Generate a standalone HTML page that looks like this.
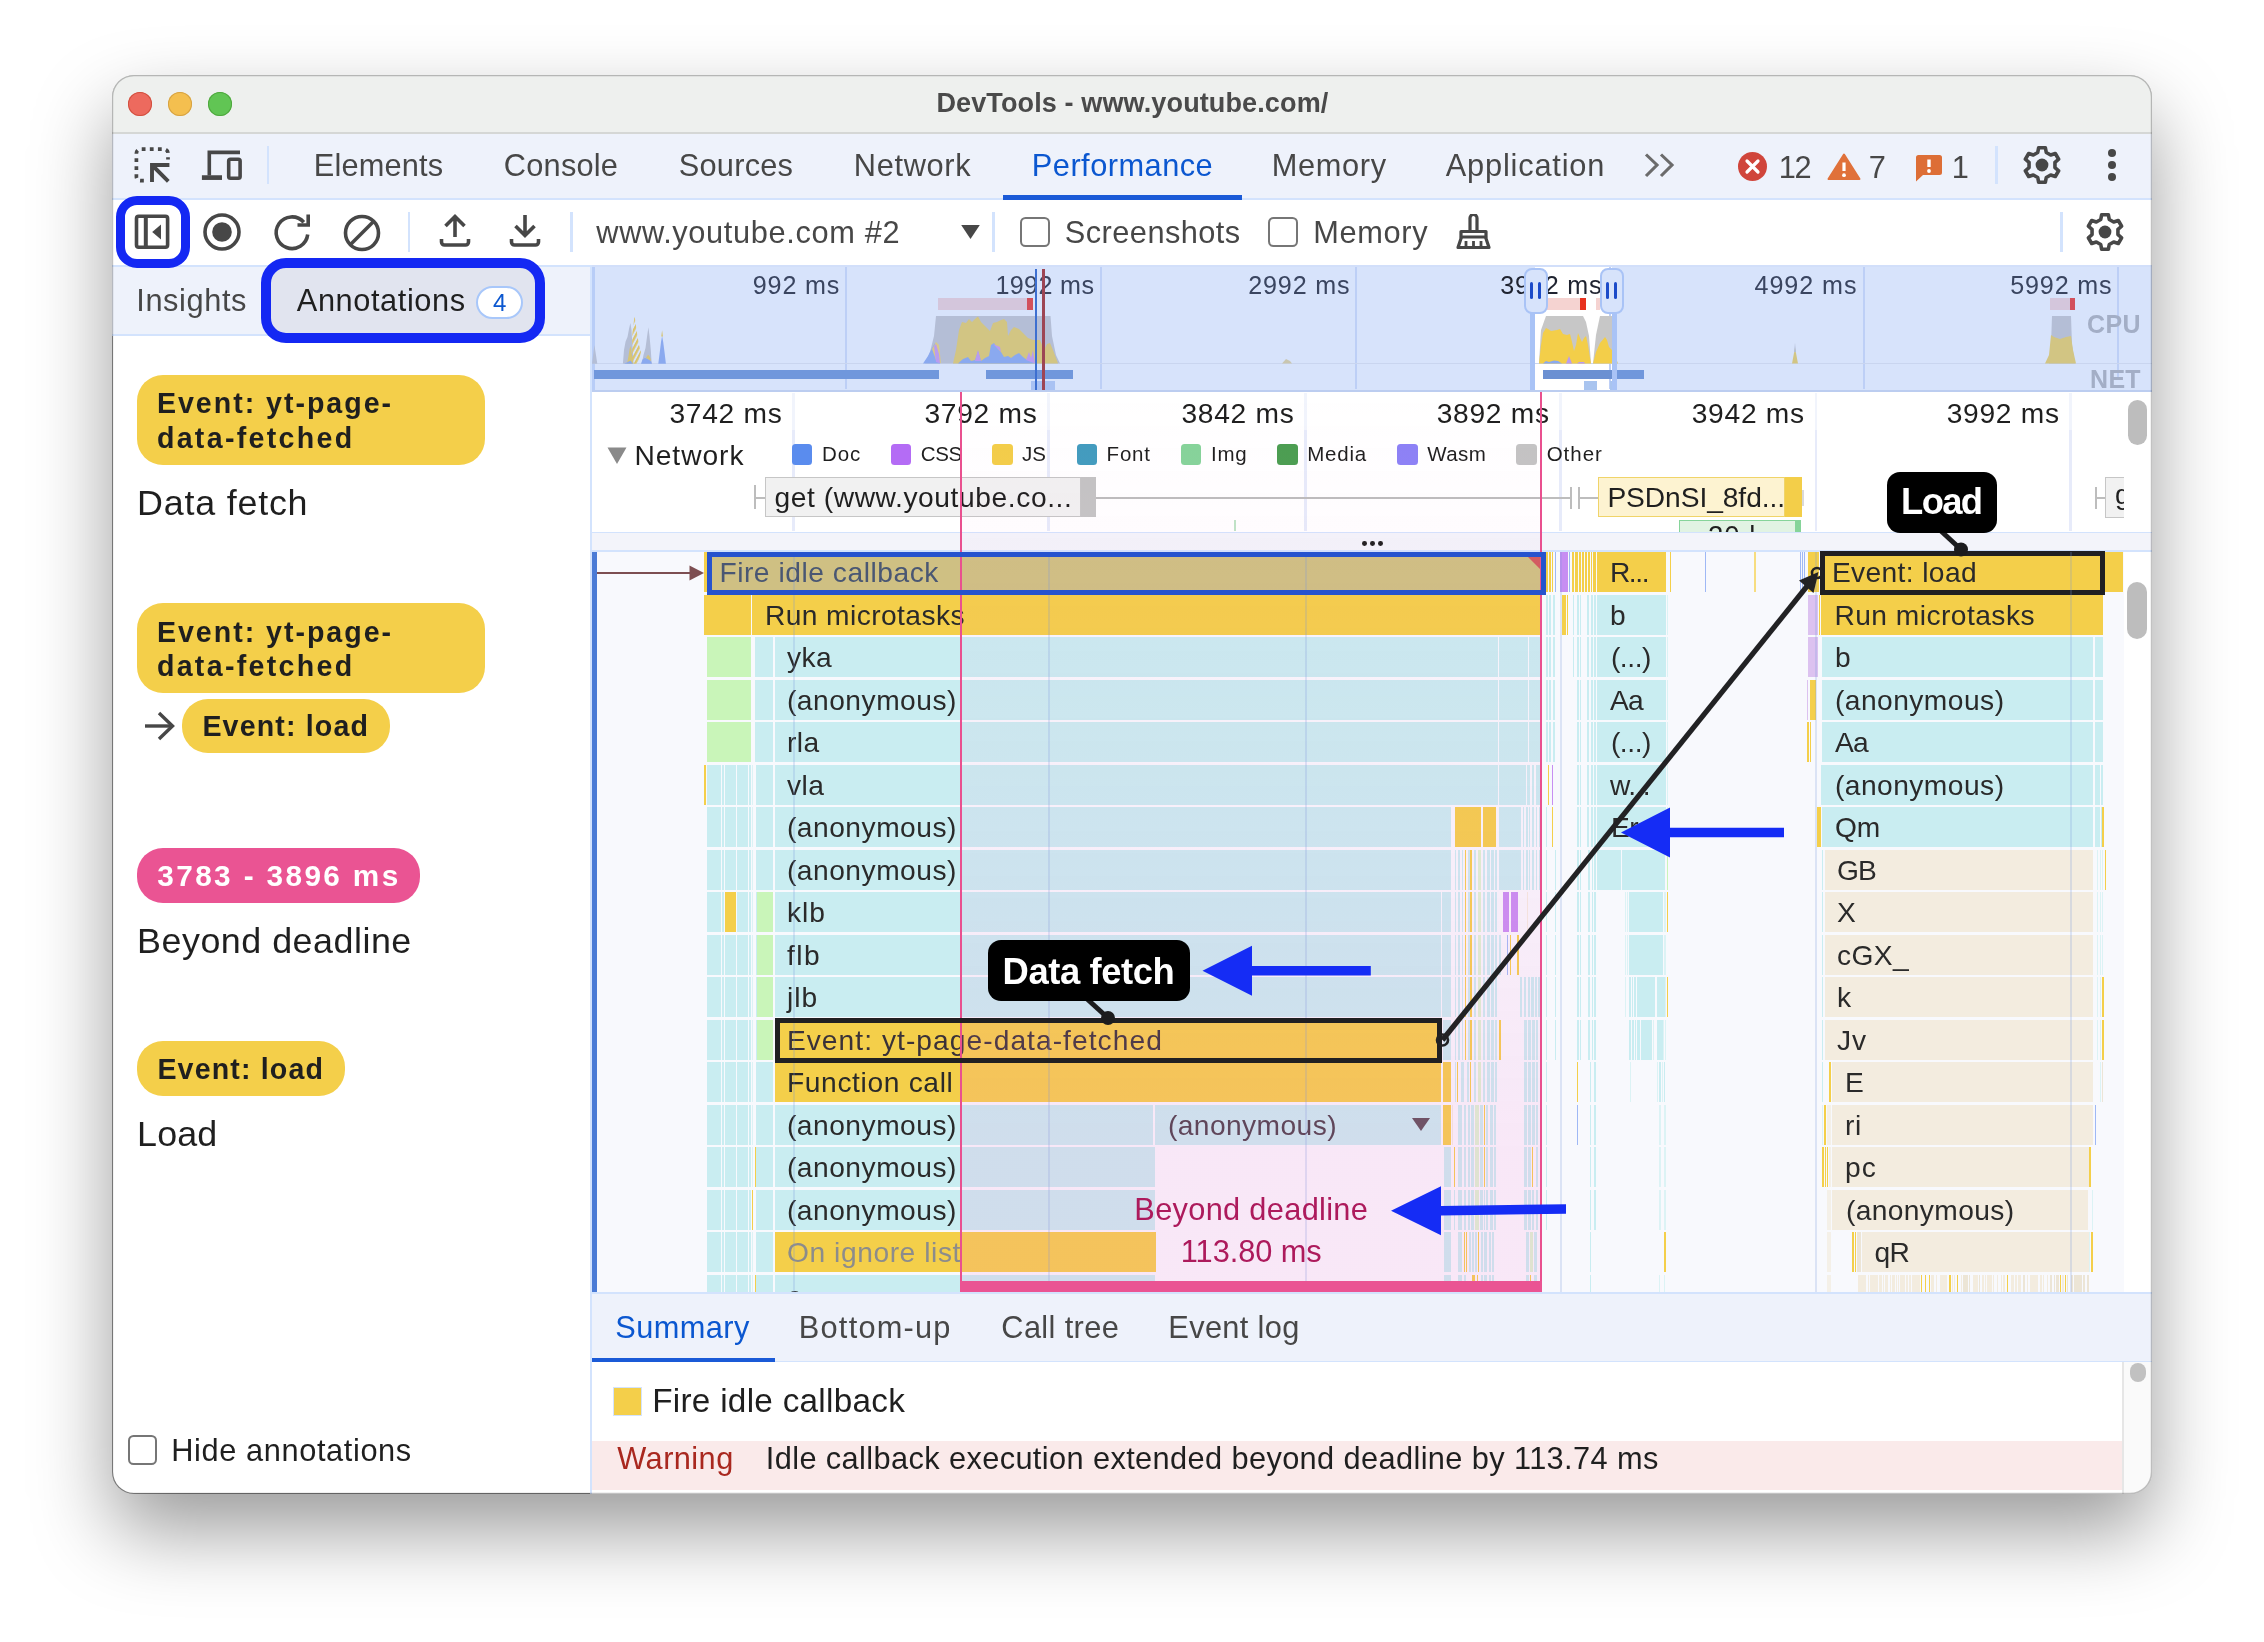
<!DOCTYPE html>
<html><head><meta charset="utf-8"><title>DevTools - www.youtube.com/</title>
<style>
html,body{margin:0;padding:0;background:#fff;}
body{width:2264px;height:1642px;position:relative;overflow:hidden;font-family:"Liberation Sans",sans-serif;}
#r div,#r svg{position:absolute;}
#r .t{white-space:nowrap;}
#in{will-change:transform;}
#win{position:absolute;left:113px;top:76px;width:2038px;height:1417px;border-radius:21px;background:#fff;box-shadow:0 0 0 1px rgba(0,0,0,.24),0 37px 80px rgba(0,0,0,.40);}
#clip{position:absolute;left:112px;top:75px;width:2040px;height:1419px;border-radius:22px;overflow:hidden;}
#ring{position:absolute;left:112px;top:75px;width:2040px;height:1419px;border-radius:22px;box-shadow:inset 0 0 0 1.2px rgba(0,0,0,.24);pointer-events:none;}
</style></head><body><div id="r">
<div id="win"></div><div id="clip"><div id="in" style="left:-112px;top:-75px;width:2264px;height:1642px;">
<div style="left:112px;top:75px;width:2040px;height:58px;background:#eef0ee;"></div>
<div style="left:112px;top:132px;width:2040px;height:1.5px;background:#d5d7d5;"></div>
<div style="left:128px;top:92px;width:24px;height:24px;background:#ed6a5e;border-radius:50%;box-shadow:inset 0 0 0 1px #d1503f;"></div>
<div style="left:168px;top:92px;width:24px;height:24px;background:#f4bf4f;border-radius:50%;box-shadow:inset 0 0 0 1px #d6a243;"></div>
<div style="left:208px;top:92px;width:24px;height:24px;background:#61c554;border-radius:50%;box-shadow:inset 0 0 0 1px #4fa73e;"></div>
<div class="t" style="left:936.46px;top:85.63px;font-size:27.04px;line-height:34px;color:#4a4a4a;letter-spacing:0.110px;font-weight:700;">DevTools - www.youtube.com/</div>
<div style="left:112px;top:133.5px;width:2040px;height:64.5px;background:#eef2fb;"></div>
<div style="left:112px;top:198px;width:2040px;height:2px;background:#d3e3fd;"></div>
<div style="left:112px;top:200px;width:2040px;height:65px;background:#fff;"></div>
<div style="left:112px;top:265px;width:2040px;height:2px;background:#d3e3fd;"></div>
<div class="t" style="left:313.80px;top:145.65px;font-size:30.75px;line-height:39px;color:#474747;letter-spacing:0.152px;">Elements</div>
<div class="t" style="left:503.80px;top:145.65px;font-size:30.75px;line-height:39px;color:#474747;letter-spacing:0.225px;">Console</div>
<div class="t" style="left:678.80px;top:145.65px;font-size:30.75px;line-height:39px;color:#474747;letter-spacing:0.227px;">Sources</div>
<div class="t" style="left:853.80px;top:145.65px;font-size:30.75px;line-height:39px;color:#474747;letter-spacing:0.660px;">Network</div>
<div class="t" style="left:1271.80px;top:145.65px;font-size:30.75px;line-height:39px;color:#474747;letter-spacing:0.641px;">Memory</div>
<div class="t" style="left:1445.80px;top:145.65px;font-size:30.75px;line-height:39px;color:#474747;letter-spacing:0.815px;">Application</div>
<div class="t" style="left:1031.80px;top:145.65px;font-size:30.75px;line-height:39px;color:#0b57d0;letter-spacing:0.487px;">Performance</div>
<div style="left:1003px;top:195px;width:239px;height:4.5px;background:#1a5ad7;"></div>
<svg style="left:132px;top:145px;" width="40" height="40" viewBox="0 0 40 40"><g fill="none" stroke="#474747"><path d="M36 14.5 V8.2 a4 4 0 0 0 -4 -4 H8.4 a4 4 0 0 0 -4 4 V31.7 a4 4 0 0 0 4 4 H14.5" stroke-width="3.7" stroke-dasharray="3.8 4.3" stroke-dashoffset="1.5"/><path d="M20 37 V20 H37.4 M21 21 L36.3 36.3" stroke-width="3.9"/></g></svg>
<svg style="left:200px;top:148px;" width="46" height="34" viewBox="0 0 46 34"><g fill="none" stroke="#474747" stroke-width="3.6"><path d="M9.3 27.5 V4.4 H40"/><path d="M1.9 29.6 H22" stroke-width="4.7"/><rect x="28.7" y="11.3" width="11.4" height="19" rx="1.8"/></g></svg>
<div style="left:267.2px;top:146px;width:2.1px;height:38px;background:#d3e3fd;"></div>
<svg style="left:1642px;top:152px;" width="36" height="28" viewBox="0 0 36 28"><g fill="none" stroke="#6b6b6b" stroke-width="3.1"><path d="M4 2.5 L15 13 L4 24"/><path d="M19 2.5 L30 13 L19 24"/></g></svg>
<svg style="left:1737px;top:151px;" width="31" height="31" viewBox="0 0 31 31"><circle cx="15.5" cy="15.5" r="14.5" fill="#d0453b"/><path d="M10 10 L21 21 M21 10 L10 21" stroke="#fff" stroke-width="3.2" stroke-linecap="round"/></svg>
<div class="t" style="left:1778.80px;top:147.65px;font-size:30.75px;line-height:39px;color:#474747;letter-spacing:-1.402px;">12</div>
<svg style="left:1826px;top:152px;" width="36" height="29" viewBox="0 0 36 29"><path d="M18 2.5 L33.5 27 H2.5 Z" fill="#e0713a" stroke="#e0713a" stroke-width="2" stroke-linejoin="round"/><path d="M18 10.5 V19" stroke="#fff" stroke-width="3.2"/><circle cx="18" cy="23.2" r="1.9" fill="#fff"/></svg>
<div class="t" style="left:1868.80px;top:147.65px;font-size:30.75px;line-height:39px;color:#474747;">7</div>
<svg style="left:1914px;top:153px;" width="30" height="30" viewBox="0 0 30 30"><path d="M2 4.5 a2.5 2.5 0 0 1 2.5 -2.5 H25.5 a2.5 2.5 0 0 1 2.5 2.5 V19.5 a2.5 2.5 0 0 1 -2.5 2.5 H9 L2 28.5 Z" fill="#dd6e36"/><path d="M15 6.5 V14" stroke="#fff" stroke-width="3.4"/><circle cx="15" cy="18" r="1.9" fill="#fff"/></svg>
<div class="t" style="left:1951.80px;top:147.65px;font-size:30.75px;line-height:39px;color:#474747;">1</div>
<div style="left:1995px;top:146px;width:2.5px;height:38px;background:#d3e3fd;"></div>
<svg style="left:2022px;top:144.8px;" width="40" height="40" viewBox="0 0 40 40"><path d="M16.68 2.72 L23.32 2.72 L24.28 7.51 L28.67 10.05 L33.31 8.48 L36.63 14.24 L32.95 17.46 L32.95 22.54 L36.63 25.76 L33.31 31.52 L28.68 29.95 L24.28 32.49 L23.32 37.28 L16.68 37.28 L15.72 32.49 L11.33 29.95 L6.69 31.52 L3.37 25.76 L7.05 22.54 L7.05 17.46 L3.37 14.24 L6.69 8.48 L11.32 10.05 L15.72 7.51 Z" fill="none" stroke="#474747" stroke-width="3.6" stroke-linejoin="round"/><circle cx="20" cy="20" r="6.4" fill="#474747"/></svg>
<div style="left:2107.7px;top:149.3px;width:8px;height:8px;background:#474747;border-radius:50%;"></div>
<div style="left:2107.7px;top:161.3px;width:8px;height:8px;background:#474747;border-radius:50%;"></div>
<div style="left:2107.7px;top:173.2px;width:8px;height:8px;background:#474747;border-radius:50%;"></div>
<svg style="left:132px;top:213px;" width="40" height="40" viewBox="0 0 40 40"><g fill="none" stroke="#474747" stroke-width="3.6"><rect x="4.5" y="3.2" width="31.1" height="31" rx="2.2"/><path d="M13.8 3.2 V34.2" stroke-width="4"/></g><path d="M20.2 18.9 L29 11.4 V26.4 Z" fill="#474747"/></svg>
<svg style="left:202px;top:212px;" width="40" height="40" viewBox="0 0 40 40"><circle cx="20" cy="20" r="17" fill="none" stroke="#474747" stroke-width="3.6"/><circle cx="20" cy="20" r="9.8" fill="#474747"/></svg>
<svg style="left:270px;top:211px;" width="44" height="44" viewBox="0 0 44 44"><g fill="none" stroke="#474747" stroke-width="3.6"><path d="M37.7 23.5 A15.8 15.8 0 1 1 33.8 11.2"/><path d="M38.2 3.4 V14 H27.5"/></g></svg>
<svg style="left:342px;top:213px;" width="40" height="40" viewBox="0 0 40 40"><g fill="none" stroke="#474747" stroke-width="3.6"><circle cx="20" cy="20" r="16.5"/><path d="M8.5 31.5 L31.5 8.5"/></g></svg>
<div style="left:407.5px;top:212px;width:2.5px;height:40px;background:#d3e3fd;"></div>
<svg style="left:438px;top:213px;" width="34" height="36" viewBox="0 0 34 36"><g fill="none" stroke="#474747" stroke-width="3.6"><path d="M17 24 V4 M7.5 13 L17 3.5 L26.5 13"/><path d="M3.5 26 V29 a3 3 0 0 0 3 3 H27.5 a3 3 0 0 0 3 -3 V26"/></g></svg>
<svg style="left:508px;top:213px;" width="34" height="36" viewBox="0 0 34 36"><g fill="none" stroke="#474747" stroke-width="3.6"><path d="M17 2 V22 M7.5 13 L17 22.5 L26.5 13"/><path d="M3.5 26 V29 a3 3 0 0 0 3 3 H27.5 a3 3 0 0 0 3 -3 V26"/></g></svg>
<div style="left:570px;top:212px;width:2.5px;height:40px;background:#d3e3fd;"></div>
<div class="t" style="left:596.30px;top:213.35px;font-size:30.75px;line-height:39px;color:#474747;letter-spacing:0.645px;">www.youtube.com #2</div>
<svg style="left:960px;top:223.5px;" width="21" height="16" viewBox="0 0 21 16"><path d="M1.2 1 H19.8 L10.5 15 Z" fill="#474747"/></svg>
<div style="left:992px;top:212px;width:2.5px;height:40px;background:#d3e3fd;"></div>
<div style="left:1020px;top:217px;width:29.7px;height:29.7px;background:#fff;border:2.5px solid #767676;border-radius:5.5px;box-sizing:border-box;"></div>
<div class="t" style="left:1064.80px;top:213.35px;font-size:30.75px;line-height:39px;color:#474747;letter-spacing:0.452px;">Screenshots</div>
<div style="left:1268px;top:217px;width:29.7px;height:29.7px;background:#fff;border:2.5px solid #767676;border-radius:5.5px;box-sizing:border-box;"></div>
<div class="t" style="left:1313.30px;top:213.35px;font-size:30.75px;line-height:39px;color:#474747;letter-spacing:0.641px;">Memory</div>
<svg style="left:1455px;top:214px;" width="37" height="36" viewBox="0 0 37 36"><g fill="none" stroke="#474747" stroke-width="3.2" stroke-linejoin="round"><path d="M15 17 V4 a3.5 3.5 0 0 1 7 0 V17"/><path d="M6 17.5 H31 V23 H6 Z"/><path d="M6.5 23 L3 33.5 H34 L30.5 23"/><path d="M11 27 V33 M18.5 27 V33 M26 27 V33" stroke-width="2.8"/></g></svg>
<div style="left:2060px;top:212px;width:2.5px;height:40px;background:#d3e3fd;"></div>
<svg style="left:2085.2px;top:212px;" width="40" height="40" viewBox="0 0 40 40"><path d="M16.68 2.72 L23.32 2.72 L24.28 7.51 L28.67 10.05 L33.31 8.48 L36.63 14.24 L32.95 17.46 L32.95 22.54 L36.63 25.76 L33.31 31.52 L28.68 29.95 L24.28 32.49 L23.32 37.28 L16.68 37.28 L15.72 32.49 L11.33 29.95 L6.69 31.52 L3.37 25.76 L7.05 22.54 L7.05 17.46 L3.37 14.24 L6.69 8.48 L11.32 10.05 L15.72 7.51 Z" fill="none" stroke="#474747" stroke-width="3.6" stroke-linejoin="round"/><circle cx="20" cy="20" r="6.4" fill="#474747"/></svg>
<div style="left:112px;top:267px;width:478px;height:66.5px;background:#eef2fb;"></div>
<div style="left:112px;top:333.5px;width:478px;height:2px;background:#d3e3fd;"></div>
<div style="left:590px;top:267px;width:2px;height:1227px;background:#d3e3fd;"></div>
<div class="t" style="left:136.30px;top:280.65px;font-size:30.75px;line-height:39px;color:#474747;letter-spacing:0.591px;">Insights</div>
<div style="left:271px;top:267px;width:264px;height:66.5px;background:#e1e4ef;border-radius:14px 14px 0 0;"></div>
<div class="t" style="left:296.80px;top:280.65px;font-size:30.75px;line-height:39px;color:#1f1f1f;letter-spacing:0.589px;">Annotations</div>
<div style="left:476px;top:286px;width:47px;height:33px;background:#fff;border:2px solid #a8c7fa;border-radius:17px;box-sizing:border-box;"></div>
<div class="t" style="left:493.10px;top:286.75px;font-size:24.0875px;line-height:31px;color:#0b57d0;">4</div>
<div style="left:137px;top:375px;width:348px;height:90px;background:#f4cf4a;border-radius:26px;"></div>
<div class="t" style="left:156.90px;top:385.09px;font-size:28.6px;line-height:36px;color:#1f1f1f;letter-spacing:1.974px;font-weight:700;">Event: yt-page-</div>
<div class="t" style="left:156.90px;top:419.89px;font-size:28.6px;line-height:36px;color:#1f1f1f;letter-spacing:2.305px;font-weight:700;">data-fetched</div>
<div class="t" style="left:137.10px;top:479.57px;font-size:35.875px;line-height:46px;color:#1f1f1f;letter-spacing:0.778px;">Data fetch</div>
<div style="left:137px;top:603px;width:348px;height:90px;background:#f4cf4a;border-radius:26px;"></div>
<div class="t" style="left:156.90px;top:613.59px;font-size:28.6px;line-height:36px;color:#1f1f1f;letter-spacing:1.974px;font-weight:700;">Event: yt-page-</div>
<div class="t" style="left:156.90px;top:647.59px;font-size:28.6px;line-height:36px;color:#1f1f1f;letter-spacing:2.305px;font-weight:700;">data-fetched</div>
<svg style="left:142px;top:708px;" width="36" height="36" viewBox="0 0 36 36"><g fill="none" stroke="#474747" stroke-width="3.4"><path d="M3 18 H30"/><path d="M17 5 L30.5 18 L17 31"/></g></svg>
<div style="left:182px;top:698.5px;width:208px;height:54.5px;background:#f4cf4a;border-radius:26px;"></div>
<div class="t" style="left:202.40px;top:708.09px;font-size:28.6px;line-height:36px;color:#1f1f1f;letter-spacing:1.141px;font-weight:700;">Event: load</div>
<div style="left:137px;top:848px;width:283px;height:55px;background:#ea5493;border-radius:26px;"></div>
<div class="t" style="left:157.36px;top:857.19px;font-size:29.744px;line-height:37px;color:#fff;letter-spacing:2.376px;font-weight:700;">3783 - 3896 ms</div>
<div class="t" style="left:137.10px;top:917.57px;font-size:35.875px;line-height:46px;color:#1f1f1f;letter-spacing:0.500px;">Beyond deadline</div>
<div style="left:137px;top:1041px;width:208px;height:55px;background:#f4cf4a;border-radius:26px;"></div>
<div class="t" style="left:157.40px;top:1051.09px;font-size:28.6px;line-height:36px;color:#1f1f1f;letter-spacing:1.141px;font-weight:700;">Event: load</div>
<div class="t" style="left:137.10px;top:1110.57px;font-size:35.875px;line-height:46px;color:#1f1f1f;letter-spacing:0.122px;">Load</div>
<div style="left:127.5px;top:1435px;width:29.7px;height:29.7px;background:#fff;border:2.5px solid #767676;border-radius:5.5px;box-sizing:border-box;"></div>
<div class="t" style="left:171.30px;top:1430.65px;font-size:30.75px;line-height:39px;color:#1f1f1f;letter-spacing:0.607px;">Hide annotations</div>
<div style="left:592px;top:267px;width:1560px;height:123px;background:#d7e3fb;"></div>
<div style="left:592px;top:265px;width:1560px;height:2px;background:#d2dffa;"></div>
<div style="left:592px;top:389.5px;width:1560px;height:2px;background:#bccdf0;"></div>
<div style="left:592px;top:267px;width:2.9px;height:123px;background:#b8cdf7;"></div>
<div style="left:1535px;top:267px;width:77px;height:123px;background:#fff;"></div>
<div style="left:844.5px;top:267px;width:2px;height:122px;background:#bdcff6;"></div>
<div style="left:1099.5px;top:267px;width:2px;height:122px;background:#bdcff6;"></div>
<div style="left:1354.5px;top:267px;width:2px;height:122px;background:#bdcff6;"></div>
<div style="left:1608.5px;top:267px;width:2px;height:122px;background:#bdcff6;"></div>
<div style="left:1862.5px;top:267px;width:2px;height:122px;background:#bdcff6;"></div>
<div style="left:2117px;top:267px;width:2px;height:122px;background:#bdcff6;"></div>
<div style="left:594px;top:363.2px;width:1558px;height:1.2px;background:#c9d5ef;"></div>
<div class="t" style="left:752.84px;top:268.60px;font-size:25.1125px;line-height:32px;color:#3a4560;letter-spacing:0.818px;">992 ms</div>
<div class="t" style="left:995.40px;top:268.60px;font-size:25.1125px;line-height:32px;color:#3a4560;letter-spacing:0.377px;">1992 ms</div>
<div class="t" style="left:1248.33px;top:268.60px;font-size:25.1125px;line-height:32px;color:#3a4560;letter-spacing:0.806px;">2992 ms</div>
<div class="t" style="left:1754.47px;top:268.60px;font-size:25.1125px;line-height:32px;color:#3a4560;letter-spacing:0.949px;">4992 ms</div>
<div class="t" style="left:2010.33px;top:268.60px;font-size:25.1125px;line-height:32px;color:#3a4560;letter-spacing:0.806px;">5992 ms</div>
<div class="t" style="left:1500.33px;top:268.60px;font-size:25.1125px;line-height:32px;color:#1f2330;letter-spacing:0.806px;">3992 ms</div>
<div class="t" style="left:2087.04px;top:309.35px;font-size:24.96px;line-height:31px;color:#a3aec6;letter-spacing:0.406px;font-weight:700;">CPU</div>
<div style="left:1897px;top:380px;width:255px;height:10px;background:#d7e3fb;"></div>
<div class="t" style="left:2090.04px;top:364.35px;font-size:24.96px;line-height:31px;color:#a3aec6;letter-spacing:0.333px;font-weight:700;">NET</div>
<svg style="left:592px;top:290px;" width="1560" height="80" viewBox="0 0 1560 80"><defs><pattern id="hz" width="4.2" height="4.2" patternUnits="userSpaceOnUse" patternTransform="rotate(-62)"><rect x="0" y="0" width="4.2" height="2.3" fill="#d9c46f"/></pattern></defs><path d="M0 73.7 L1.5 62 L2.4 54.9 L3.5 62 L5.3 73.7 Z" fill="#b4bed6" /><path d="M30.9 73.7 L32 60 L33.6 51.5 L35.5 47 L37 39 L38.4 32.9 L39.5 40 L40.4 55 L41.5 73.7 Z" fill="#b4bed6" /><path d="M40 73.7 L40.2 45 L42.6 25.6 L44.5 40 L47 55 L49 62 L46 73.7 Z" fill="url(#hz)" /><path d="M35 73.7 L36.5 66 L37.6 59 L38.4 55.9 L39.3 60 L40.5 68 L41.4 73.7 Z" fill="#d5c477" /><path d="M32 73.7 L35 72.5 L38.4 70.5 L40 72.5 L41 73.7 Z" fill="#8aa9ef" /><path d="M49.7 73.7 L51.5 65 L53.5 58 L55 47 L56.4 37.3 L57.5 46 L58.8 60 L59.7 73.7 Z" fill="#b4bed6" /><path d="M49 73.7 L50.5 69.5 L52.6 68 L55 68.5 L57.5 70 L59 71.5 L60 73.7 Z" fill="#8aa9ef" /><path d="M54 67.8 L56 64.8 L58 67 L59 71 L57.5 70 L55 68.5 Z" fill="#d5c477" /><path d="M66.3 73.7 L67.8 62 L69 52 L70.1 46.1 L71.2 52 L72.5 62 L73.9 73.7 Z" fill="#8aa9ef" /><path d="M69.2 46.5 L70.1 40.2 L71 46.5 Z" fill="#d5c477" /><path d="M333 73.5 L338 62 L342 46 L344 26 L458.5 26 L460 46 L464 65 L468 73.5 Z" fill="#b4bed6" /><path d="M361 73.5 L364 60 L367 40 L370 32 L374 33 L377 29 L380 32 L384 28 L386 26.5 L389 32 L393 36 L398 41 L401 33 L405 32 L409 30 L412 29 L415 32 L416 46 L419 40 L422 37 L427 39 L431 43 L436 48 L441 50 L448 50 L452 60 L455 54 L458 53 L461 60 L464 68 L466 73.5 Z" fill="#d2c583" /><path d="M331 73.5 L336 66 L340 58 L343 53 L346 62 L348 73.5 Z" fill="#8aa9ef" /><path d="M340 59 L344 52 L347 55 L349 73.5 L344 70 Z" fill="#d8c88a" /><path d="M342 56 L344 54 L347 64 L348 73.5 L344 72 Z" fill="#b99cf0" /><path d="M366 73.5 L371 69 L376 67 L379 71 L383 70 L386 61 L389 71 L393 68 L397 66 L399 55 L402 53 L406 59 L409 62 L412 67 L416 66 L419 68 L423 65 L427 63 L431 67 L435 70 L439 68 L442 73.5 Z" fill="#8aa9ef" /><path d="M383 71 L386 60 L389 71 Z" fill="#b99cf0" /><path d="M401 54 L406 59 L409 62 L408 57 Z" fill="#b99cf0" /><path d="M434 70 L437 62 L439 68 L441 60 L443 73.5 Z" fill="#b99cf0" /><path d="M690 73.5 L694 69 L698 71 L700 73.5 Z" fill="#c9c6b0" /><path d="M947 73.5 L949 40 L954 26 L991 26 L994 32 L997 46 L999 73.5 Z" fill="#c7c7c7" /><path d="M947 73.5 L949 55 L951 43 L954 38 L956 39 L959 41 L965 40 L968 39 L971 44 L975 45 L978 44 L980 52 L982 61 L984 55 L986 43 L988 48 L990 52 L992 48 L994 46 L996 55 L998 68 L999 73.5 Z" fill="#f3ce49" /><path d="M951 73.5 L954 71 L957 72 L962 70.5 L966 71 L970 73.5 Z" fill="#8aa9ef" /><path d="M974 73.5 L977 66 L980 73.5 Z" fill="#b99cf0" /><path d="M985 73.5 L987 72 L992 72 L993 73.5 Z" fill="#b99cf0" /><path d="M1001 73.5 L1004 45 L1008 26 L1020 26 L1020 73.5 Z" fill="#c7c7c7" /><path d="M1001 73.5 L1004 62 L1008 53 L1013 47 L1015 50 L1017 57 L1020 60 L1020 73.5 Z" fill="#f3ce49" /><path d="M1020 73.5 L1020 62 L1024 68 L1026 73.5 Z" fill="#d2c583" /><path d="M1200 73.5 L1203 58 L1206 73.5 Z" fill="#d2c583" /><path d="M1202 62 L1203 53 L1204 62 Z" fill="#b4bed6" /><path d="M1457 73.5 L1459 55 L1460 26 L1479 26 L1480 55 L1483 73.5 Z" fill="#b4bed6" /><path d="M1453 73.5 L1457 65 L1459 45 L1462 47 L1468 49 L1474 47 L1479 46 L1481 60 L1484 73.5 Z" fill="#d2c583" /></svg>
<div style="left:938px;top:297.5px;width:94.5px;height:12px;background:#d4c6dc;"></div>
<div style="left:1027px;top:297.5px;width:5.5px;height:12px;background:#d2505c;"></div>
<div style="left:1547px;top:297.5px;width:38.5px;height:12px;background:#f5d3d1;"></div>
<div style="left:1580px;top:297.5px;width:5.5px;height:12px;background:#e8321f;"></div>
<div style="left:1596px;top:297.5px;width:4px;height:12px;background:#f5d3d1;"></div>
<div style="left:2049.5px;top:297.5px;width:25px;height:12px;background:#d4c6dc;"></div>
<div style="left:2069.5px;top:297.5px;width:5px;height:12px;background:#d2505c;"></div>
<div style="left:594.1px;top:370.2px;width:344.9px;height:8.6px;background:#7097dc;"></div>
<div style="left:986px;top:370px;width:87px;height:9px;background:#7097dc;"></div>
<div style="left:1031px;top:380.5px;width:24px;height:9px;background:#a9c2f3;"></div>
<div style="left:1543px;top:370px;width:69px;height:9px;background:#6b90d2;"></div>
<div style="left:1612px;top:370px;width:32px;height:9px;background:#7097dc;"></div>
<div style="left:1584px;top:380.5px;width:13px;height:9px;background:#a9c4ef;"></div>
<div style="left:1609.5px;top:380.5px;width:2.5px;height:9px;background:#a9c4ef;"></div>
<div style="left:1035px;top:269px;width:2px;height:120.5px;background:#3d6fd0;"></div>
<div style="left:1041.5px;top:269px;width:3px;height:120.5px;background:#9d4554;"></div>
<div style="left:1530.2px;top:312px;width:4.8px;height:78px;background:#a9c3f6;"></div>
<div style="left:1612px;top:312px;width:5px;height:78px;background:#a9c3f6;"></div>
<div style="left:1523.5px;top:267.5px;width:24px;height:46.5px;background:#d7e3fb;border:2px solid #a9c3f6;border-radius:8px;box-sizing:border-box;"></div>
<div style="left:1530.1px;top:282px;width:3px;height:17px;background:#1c4bc9;border-radius:1.5px;"></div>
<div style="left:1537.9px;top:282px;width:3px;height:17px;background:#1c4bc9;border-radius:1.5px;"></div>
<div style="left:1599.5px;top:267.5px;width:24px;height:46.5px;background:#d7e3fb;border:2px solid #a9c3f6;border-radius:8px;box-sizing:border-box;"></div>
<div style="left:1606.1px;top:282px;width:3px;height:17px;background:#1c4bc9;border-radius:1.5px;"></div>
<div style="left:1613.9px;top:282px;width:3px;height:17px;background:#1c4bc9;border-radius:1.5px;"></div>
<div style="left:592px;top:391.5px;width:1560px;height:140.5px;background:#fff;"></div>
<div style="left:792.2px;top:393px;width:2.6px;height:37px;background:#f1f4fc;"></div>
<div style="left:792.2px;top:430px;width:2.6px;height:101px;background:#e7ebfa;"></div>
<div style="left:1047.2px;top:393px;width:2.6px;height:37px;background:#f1f4fc;"></div>
<div style="left:1047.2px;top:430px;width:2.6px;height:101px;background:#e7ebfa;"></div>
<div style="left:1304.2px;top:393px;width:2.6px;height:37px;background:#f1f4fc;"></div>
<div style="left:1304.2px;top:430px;width:2.6px;height:101px;background:#e7ebfa;"></div>
<div style="left:1559.4px;top:393px;width:2.6px;height:37px;background:#f1f4fc;"></div>
<div style="left:1559.4px;top:430px;width:2.6px;height:101px;background:#e7ebfa;"></div>
<div style="left:1814.5px;top:393px;width:2.6px;height:37px;background:#f1f4fc;"></div>
<div style="left:1814.5px;top:430px;width:2.6px;height:101px;background:#e7ebfa;"></div>
<div style="left:2069.4px;top:393px;width:2.6px;height:37px;background:#f1f4fc;"></div>
<div style="left:2069.4px;top:430px;width:2.6px;height:101px;background:#e7ebfa;"></div>
<div class="t" style="left:669.43px;top:394.63px;font-size:28.1875px;line-height:36px;color:#1f1f1f;letter-spacing:0.727px;">3742 ms</div>
<div class="t" style="left:924.43px;top:394.63px;font-size:28.1875px;line-height:36px;color:#1f1f1f;letter-spacing:0.727px;">3792 ms</div>
<div class="t" style="left:1181.43px;top:394.63px;font-size:28.1875px;line-height:36px;color:#1f1f1f;letter-spacing:0.727px;">3842 ms</div>
<div class="t" style="left:1436.63px;top:394.63px;font-size:28.1875px;line-height:36px;color:#1f1f1f;letter-spacing:0.727px;">3892 ms</div>
<div class="t" style="left:1691.73px;top:394.63px;font-size:28.1875px;line-height:36px;color:#1f1f1f;letter-spacing:0.727px;">3942 ms</div>
<div class="t" style="left:1946.63px;top:394.63px;font-size:28.1875px;line-height:36px;color:#1f1f1f;letter-spacing:0.727px;">3992 ms</div>
<svg style="left:606px;top:446px;" width="22" height="20" viewBox="0 0 22 20"><path d="M1.5 1.5 H20.5 L11 18 Z" fill="#8a8a8a"/></svg>
<div class="t" style="left:634.40px;top:436.63px;font-size:28.1875px;line-height:36px;color:#1f1f1f;letter-spacing:0.974px;">Network</div>
<div style="left:791.7px;top:444px;width:20.5px;height:20.5px;background:#5a8cee;border-radius:3.5px;"></div>
<div class="t" style="left:821.90px;top:441.20px;font-size:20.5px;line-height:26px;color:#1f1f1f;letter-spacing:0.948px;">Doc</div>
<div style="left:890.8px;top:444px;width:20.5px;height:20.5px;background:#b46cf5;border-radius:3.5px;"></div>
<div class="t" style="left:920.70px;top:441.20px;font-size:20.5px;line-height:26px;color:#1f1f1f;letter-spacing:-0.351px;">CSS</div>
<div style="left:992px;top:444px;width:20.5px;height:20.5px;background:#f3ce49;border-radius:3.5px;"></div>
<div class="t" style="left:1021.90px;top:441.20px;font-size:20.5px;line-height:26px;color:#1f1f1f;letter-spacing:0.138px;">JS</div>
<div style="left:1076.7px;top:444px;width:20.5px;height:20.5px;background:#429cbf;border-radius:3.5px;"></div>
<div class="t" style="left:1106.60px;top:441.20px;font-size:20.5px;line-height:26px;color:#1f1f1f;letter-spacing:0.795px;">Font</div>
<div style="left:1180.7px;top:444px;width:20.5px;height:20.5px;background:#86d49a;border-radius:3.5px;"></div>
<div class="t" style="left:1211.00px;top:441.20px;font-size:20.5px;line-height:26px;color:#1f1f1f;letter-spacing:0.775px;">Img</div>
<div style="left:1277.4px;top:444px;width:20.5px;height:20.5px;background:#4b9e51;border-radius:3.5px;"></div>
<div class="t" style="left:1307.20px;top:441.20px;font-size:20.5px;line-height:26px;color:#1f1f1f;letter-spacing:0.813px;">Media</div>
<div style="left:1397.4px;top:444px;width:20.5px;height:20.5px;background:#8d82f6;border-radius:3.5px;"></div>
<div class="t" style="left:1427.20px;top:441.20px;font-size:20.5px;line-height:26px;color:#1f1f1f;letter-spacing:0.421px;">Wasm</div>
<div style="left:1516px;top:444px;width:20.5px;height:20.5px;background:#c4c4c4;border-radius:3.5px;"></div>
<div class="t" style="left:1546.70px;top:441.20px;font-size:20.5px;line-height:26px;color:#1f1f1f;letter-spacing:0.966px;">Other</div>
<div style="left:754px;top:485px;width:2px;height:24px;background:#bdbdbd;"></div>
<div style="left:756px;top:497px;width:9px;height:2px;background:#bdbdbd;"></div>
<div style="left:1095px;top:497.3px;width:476px;height:2px;background:#bdbdbd;"></div>
<div style="left:1569.5px;top:487px;width:2px;height:22px;background:#bdbdbd;"></div>
<div style="left:1577.5px;top:487px;width:2px;height:22px;background:#bdbdbd;"></div>
<div style="left:1579.5px;top:497.3px;width:18.5px;height:2px;background:#bdbdbd;"></div>
<div style="left:764.5px;top:477px;width:316px;height:40px;background:#f1f1f1;border:1.5px solid #c6c6c6;box-sizing:border-box;"></div>
<div style="left:1080.5px;top:477px;width:15px;height:40px;background:#c4c4c4;"></div>
<div class="t" style="left:774.40px;top:479.23px;font-size:28.1875px;line-height:36px;color:#1f1f1f;letter-spacing:0.593px;">get (www.youtube.co...</div>
<div style="left:1598px;top:477px;width:187px;height:40px;background:#fdf3d1;border:1.5px solid #f0d469;box-sizing:border-box;"></div>
<div style="left:1784.5px;top:477px;width:17.5px;height:40px;background:#f3ce49;"></div>
<div style="left:1802px;top:490px;width:1.5px;height:16px;background:#d9d9d9;"></div>
<div class="t" style="left:1607.40px;top:479.23px;font-size:28.1875px;line-height:36px;color:#1f1f1f;letter-spacing:-0.071px;">PSDnSI_8fd...</div>
<div style="left:1679px;top:520px;width:122px;height:12px;overflow:hidden;"><div style="left:0;top:0;width:122px;height:40px;background:#e1f3e3;border:1.5px solid #86d49a;box-sizing:border-box;"></div><div style="left:116px;top:0;width:6px;height:40px;background:#86d49a;"></div><div class="t" style="left:29px;top:-2.5px;font-size:27.5px;line-height:36px;color:#1f1f1f;letter-spacing:1px;">20 l...</div></div>
<div style="left:1234px;top:520px;width:1.5px;height:11px;background:#bfe5c6;"></div>
<div style="left:2094.5px;top:487px;width:2px;height:22px;background:#bdbdbd;"></div>
<div style="left:2096.5px;top:497.3px;width:8.5px;height:2px;background:#bdbdbd;"></div>
<div style="left:2105px;top:477px;width:18.5px;height:40.5px;overflow:hidden;background:#f1f1f1;border:1.5px solid #c6c6c6;border-right:none;box-sizing:border-box;"><div class="t" style="left:9px;top:-1.5px;font-size:27.5px;line-height:36px;color:#1f1f1f;">get</div></div>
<div style="left:2124px;top:391.5px;width:28px;height:140.5px;background:#fff;"></div>
<div style="left:2128px;top:400px;width:18.5px;height:45px;background:#bdbdbd;border-radius:9.5px;"></div>
<div style="left:592px;top:531.5px;width:1560px;height:1.5px;background:#d3e3fd;"></div>
<div style="left:592px;top:533px;width:1560px;height:17px;background:#f3f4fa;"></div>
<div style="left:592px;top:550px;width:1560px;height:1.5px;background:#d3e3fd;"></div>
<div style="left:1362.1px;top:541px;width:4.8px;height:4.8px;background:#1f1f1f;border-radius:50%;"></div>
<div style="left:1370.1px;top:541px;width:4.8px;height:4.8px;background:#1f1f1f;border-radius:50%;"></div>
<div style="left:1378.1px;top:541px;width:4.8px;height:4.8px;background:#1f1f1f;border-radius:50%;"></div>
<div style="left:592px;top:551.5px;width:1532px;height:740.5px;background:#f8f9fd;"></div>
<div style="left:2124px;top:551.5px;width:28px;height:740.5px;background:#fff;"></div>
<div style="left:592px;top:552px;width:5px;height:740px;background:#4a7bd6;"></div>
<div style="left:704px;top:552px;width:3px;height:40px;background:#f4cf4a;"></div>
<div style="left:704px;top:594.5px;width:46.5px;height:40px;background:#f4cf4a;"></div>
<div style="left:752px;top:594.5px;width:789px;height:40px;background:#f4cf4a;"></div>
<div style="left:707px;top:637px;width:43.5px;height:40px;background:#c9f5b9;"></div>
<div style="left:754.5px;top:637px;width:18.2px;height:40px;background:#c9edf1;"></div>
<div style="left:774.5px;top:637px;width:723px;height:40px;background:#c9edf1;"></div>
<div style="left:1499px;top:637px;width:28.5px;height:40px;background:#c9edf1;"></div>
<div style="left:1529px;top:637px;width:12px;height:40px;background:#c9edf1;"></div>
<div style="left:707px;top:679.5px;width:43.5px;height:40px;background:#c9f5b9;"></div>
<div style="left:754.5px;top:679.5px;width:18.2px;height:40px;background:#c9edf1;"></div>
<div style="left:774.5px;top:679.5px;width:723px;height:40px;background:#c9edf1;"></div>
<div style="left:1499px;top:679.5px;width:28.5px;height:40px;background:#c9edf1;"></div>
<div style="left:1529px;top:679.5px;width:12px;height:40px;background:#c9edf1;"></div>
<div style="left:707px;top:722px;width:43.5px;height:40px;background:#c9f5b9;"></div>
<div style="left:754.5px;top:722px;width:18.2px;height:40px;background:#c9edf1;"></div>
<div style="left:774.5px;top:722px;width:723px;height:40px;background:#c9edf1;"></div>
<div style="left:1499px;top:722px;width:28.5px;height:40px;background:#c9edf1;"></div>
<div style="left:1529px;top:722px;width:12px;height:40px;background:#c9edf1;"></div>
<div style="left:704px;top:764.5px;width:2px;height:40px;background:#f4cf4a;"></div>
<div style="left:707px;top:764.5px;width:13.5px;height:40px;background:#c9edf1;"></div>
<div style="left:722.2px;top:764.5px;width:1.4px;height:40px;background:#c9edf1;"></div>
<div style="left:725px;top:764.5px;width:10.7px;height:40px;background:#c9edf1;"></div>
<div style="left:737.3px;top:764.5px;width:10.3px;height:40px;background:#c9edf1;"></div>
<div style="left:749px;top:764.5px;width:1.6px;height:40px;background:#c9edf1;"></div>
<div style="left:756px;top:764.5px;width:16.7px;height:40px;background:#c9edf1;"></div>
<div style="left:751.6px;top:764.5px;width:1px;height:40px;background:#dcf3f5;"></div>
<div style="left:707px;top:807px;width:13.5px;height:40px;background:#c9edf1;"></div>
<div style="left:722.2px;top:807px;width:1.4px;height:40px;background:#c9edf1;"></div>
<div style="left:725px;top:807px;width:10.7px;height:40px;background:#c9edf1;"></div>
<div style="left:737.3px;top:807px;width:10.3px;height:40px;background:#c9edf1;"></div>
<div style="left:749px;top:807px;width:1.6px;height:40px;background:#c9edf1;"></div>
<div style="left:756px;top:807px;width:16.7px;height:40px;background:#c9edf1;"></div>
<div style="left:751.6px;top:807px;width:1px;height:40px;background:#dcf3f5;"></div>
<div style="left:707px;top:849.5px;width:13.5px;height:40px;background:#c9edf1;"></div>
<div style="left:722.2px;top:849.5px;width:1.4px;height:40px;background:#c9edf1;"></div>
<div style="left:725px;top:849.5px;width:10.7px;height:40px;background:#c9edf1;"></div>
<div style="left:737.3px;top:849.5px;width:10.3px;height:40px;background:#c9edf1;"></div>
<div style="left:749px;top:849.5px;width:1.6px;height:40px;background:#c9edf1;"></div>
<div style="left:756px;top:849.5px;width:16.7px;height:40px;background:#c9edf1;"></div>
<div style="left:751.6px;top:849.5px;width:1px;height:40px;background:#dcf3f5;"></div>
<div style="left:707px;top:892px;width:13.5px;height:40px;background:#c9edf1;"></div>
<div style="left:722.2px;top:892px;width:1.4px;height:40px;background:#c9edf1;"></div>
<div style="left:725px;top:892px;width:10.7px;height:40px;background:#c9edf1;"></div>
<div style="left:737.3px;top:892px;width:10.3px;height:40px;background:#c9edf1;"></div>
<div style="left:749px;top:892px;width:1.6px;height:40px;background:#c9edf1;"></div>
<div style="left:756px;top:892px;width:16.7px;height:40px;background:#c9edf1;"></div>
<div style="left:751.6px;top:892px;width:1px;height:40px;background:#dcf3f5;"></div>
<div style="left:707px;top:934.5px;width:13.5px;height:40px;background:#c9edf1;"></div>
<div style="left:722.2px;top:934.5px;width:1.4px;height:40px;background:#c9edf1;"></div>
<div style="left:725px;top:934.5px;width:10.7px;height:40px;background:#c9edf1;"></div>
<div style="left:737.3px;top:934.5px;width:10.3px;height:40px;background:#c9edf1;"></div>
<div style="left:749px;top:934.5px;width:1.6px;height:40px;background:#c9edf1;"></div>
<div style="left:756px;top:934.5px;width:16.7px;height:40px;background:#c9edf1;"></div>
<div style="left:751.6px;top:934.5px;width:1px;height:40px;background:#dcf3f5;"></div>
<div style="left:707px;top:977px;width:13.5px;height:40px;background:#c9edf1;"></div>
<div style="left:722.2px;top:977px;width:1.4px;height:40px;background:#c9edf1;"></div>
<div style="left:725px;top:977px;width:10.7px;height:40px;background:#c9edf1;"></div>
<div style="left:737.3px;top:977px;width:10.3px;height:40px;background:#c9edf1;"></div>
<div style="left:749px;top:977px;width:1.6px;height:40px;background:#c9edf1;"></div>
<div style="left:756px;top:977px;width:16.7px;height:40px;background:#c9edf1;"></div>
<div style="left:751.6px;top:977px;width:1px;height:40px;background:#dcf3f5;"></div>
<div style="left:707px;top:1019.5px;width:13.5px;height:40px;background:#c9edf1;"></div>
<div style="left:722.2px;top:1019.5px;width:1.4px;height:40px;background:#c9edf1;"></div>
<div style="left:725px;top:1019.5px;width:10.7px;height:40px;background:#c9edf1;"></div>
<div style="left:737.3px;top:1019.5px;width:10.3px;height:40px;background:#c9edf1;"></div>
<div style="left:749px;top:1019.5px;width:1.6px;height:40px;background:#c9edf1;"></div>
<div style="left:756px;top:1019.5px;width:16.7px;height:40px;background:#c9edf1;"></div>
<div style="left:751.6px;top:1019.5px;width:1px;height:40px;background:#dcf3f5;"></div>
<div style="left:707px;top:1062px;width:13.5px;height:40px;background:#c9edf1;"></div>
<div style="left:722.2px;top:1062px;width:1.4px;height:40px;background:#c9edf1;"></div>
<div style="left:725px;top:1062px;width:10.7px;height:40px;background:#c9edf1;"></div>
<div style="left:737.3px;top:1062px;width:10.3px;height:40px;background:#c9edf1;"></div>
<div style="left:749px;top:1062px;width:1.6px;height:40px;background:#c9edf1;"></div>
<div style="left:756px;top:1062px;width:16.7px;height:40px;background:#c9edf1;"></div>
<div style="left:751.6px;top:1062px;width:1px;height:40px;background:#dcf3f5;"></div>
<div style="left:707px;top:1104.5px;width:13.5px;height:40px;background:#c9edf1;"></div>
<div style="left:722.2px;top:1104.5px;width:1.4px;height:40px;background:#c9edf1;"></div>
<div style="left:725px;top:1104.5px;width:10.7px;height:40px;background:#c9edf1;"></div>
<div style="left:737.3px;top:1104.5px;width:10.3px;height:40px;background:#c9edf1;"></div>
<div style="left:749px;top:1104.5px;width:1.6px;height:40px;background:#c9edf1;"></div>
<div style="left:756px;top:1104.5px;width:16.7px;height:40px;background:#c9edf1;"></div>
<div style="left:751.6px;top:1104.5px;width:1px;height:40px;background:#dcf3f5;"></div>
<div style="left:707px;top:1147px;width:13.5px;height:40px;background:#c9edf1;"></div>
<div style="left:722.2px;top:1147px;width:1.4px;height:40px;background:#c9edf1;"></div>
<div style="left:725px;top:1147px;width:10.7px;height:40px;background:#c9edf1;"></div>
<div style="left:737.3px;top:1147px;width:10.3px;height:40px;background:#c9edf1;"></div>
<div style="left:749px;top:1147px;width:1.6px;height:40px;background:#c9edf1;"></div>
<div style="left:756px;top:1147px;width:16.7px;height:40px;background:#c9edf1;"></div>
<div style="left:751.6px;top:1147px;width:1px;height:40px;background:#dcf3f5;"></div>
<div style="left:707px;top:1189.5px;width:13.5px;height:40px;background:#c9edf1;"></div>
<div style="left:722.2px;top:1189.5px;width:1.4px;height:40px;background:#c9edf1;"></div>
<div style="left:725px;top:1189.5px;width:10.7px;height:40px;background:#c9edf1;"></div>
<div style="left:737.3px;top:1189.5px;width:10.3px;height:40px;background:#c9edf1;"></div>
<div style="left:749px;top:1189.5px;width:1.6px;height:40px;background:#c9edf1;"></div>
<div style="left:756px;top:1189.5px;width:16.7px;height:40px;background:#c9edf1;"></div>
<div style="left:751.6px;top:1189.5px;width:1px;height:40px;background:#dcf3f5;"></div>
<div style="left:707px;top:1232px;width:13.5px;height:40px;background:#c9edf1;"></div>
<div style="left:722.2px;top:1232px;width:1.4px;height:40px;background:#c9edf1;"></div>
<div style="left:725px;top:1232px;width:10.7px;height:40px;background:#c9edf1;"></div>
<div style="left:737.3px;top:1232px;width:10.3px;height:40px;background:#c9edf1;"></div>
<div style="left:749px;top:1232px;width:1.6px;height:40px;background:#c9edf1;"></div>
<div style="left:756px;top:1232px;width:16.7px;height:40px;background:#c9edf1;"></div>
<div style="left:751.6px;top:1232px;width:1px;height:40px;background:#dcf3f5;"></div>
<div style="left:707px;top:1274.5px;width:13.5px;height:17.5px;background:#c9edf1;"></div>
<div style="left:722.2px;top:1274.5px;width:1.4px;height:17.5px;background:#c9edf1;"></div>
<div style="left:725px;top:1274.5px;width:10.7px;height:17.5px;background:#c9edf1;"></div>
<div style="left:737.3px;top:1274.5px;width:10.3px;height:17.5px;background:#c9edf1;"></div>
<div style="left:749px;top:1274.5px;width:1.6px;height:17.5px;background:#c9edf1;"></div>
<div style="left:756px;top:1274.5px;width:16.7px;height:17.5px;background:#c9edf1;"></div>
<div style="left:751.6px;top:1274.5px;width:1px;height:17.5px;background:#dcf3f5;"></div>
<div style="left:724.5px;top:892px;width:11.2px;height:40px;background:#f4cf4a;"></div>
<div style="left:757px;top:892px;width:16px;height:40px;background:#c9f5b9;"></div>
<div style="left:757px;top:934.5px;width:16px;height:40px;background:#c9f5b9;"></div>
<div style="left:757px;top:977px;width:16px;height:40px;background:#c9f5b9;"></div>
<div style="left:757px;top:1019.5px;width:16px;height:40px;background:#c9f5b9;"></div>
<div style="left:754.5px;top:1147px;width:1.3px;height:40px;background:#f4cf4a;"></div>
<div style="left:752px;top:1189.5px;width:1.2px;height:40px;background:#f4cf4a;"></div>
<div style="left:754.5px;top:1274.5px;width:1.3px;height:17.5px;background:#f4cf4a;"></div>
<div style="left:774.5px;top:764.5px;width:723px;height:40px;background:#c9edf1;"></div>
<div style="left:1499px;top:764.5px;width:26.5px;height:40px;background:#c9edf1;"></div>
<div style="left:1527px;top:764.5px;width:3px;height:40px;background:#c9edf1;"></div>
<div style="left:1531.5px;top:764.5px;width:2.5px;height:40px;background:#c9edf1;"></div>
<div style="left:1535.5px;top:764.5px;width:5.5px;height:40px;background:#c9edf1;"></div>
<div style="left:774.5px;top:807px;width:676.5px;height:40px;background:#c9edf1;"></div>
<div style="left:1454.5px;top:807px;width:26.2px;height:40px;background:#f4cf4a;"></div>
<div style="left:1482.5px;top:807px;width:13.8px;height:40px;background:#f4cf4a;"></div>
<div style="left:1499px;top:807px;width:22px;height:40px;background:#c9edf1;"></div>
<div style="left:1522.5px;top:807px;width:1.5px;height:40px;background:#c9edf1;"></div>
<div style="left:1525.5px;top:807px;width:2px;height:40px;background:#c9edf1;"></div>
<div style="left:1529px;top:807px;width:1.2px;height:40px;background:#c9edf1;"></div>
<div style="left:1531.5px;top:807px;width:2.5px;height:40px;background:#c9edf1;"></div>
<div style="left:1535.5px;top:807px;width:1.5px;height:40px;background:#c9edf1;"></div>
<div style="left:1538.5px;top:807px;width:2px;height:40px;background:#c9edf1;"></div>
<div style="left:774.5px;top:849.5px;width:676.5px;height:40px;background:#c9edf1;"></div>
<div style="left:1499px;top:849.5px;width:22px;height:40px;background:#c9edf1;"></div>
<div style="left:1454.5px;top:849.5px;width:1.5px;height:40px;background:#c9edf1;"></div>
<div style="left:1457.5px;top:849.5px;width:2.5px;height:40px;background:#c9edf1;"></div>
<div style="left:1461.5px;top:849.5px;width:1.5px;height:40px;background:#c9edf1;"></div>
<div style="left:1464.5px;top:849.5px;width:1.8px;height:40px;background:#f4cf4a;"></div>
<div style="left:1468px;top:849.5px;width:2.5px;height:40px;background:#c9edf1;"></div>
<div style="left:1470.3px;top:849.5px;width:1.6px;height:40px;background:#f4cf4a;"></div>
<div style="left:1473.5px;top:849.5px;width:2.5px;height:40px;background:#c9edf1;"></div>
<div style="left:1477.5px;top:849.5px;width:3.5px;height:40px;background:#dcf3d0;"></div>
<div style="left:1482.5px;top:849.5px;width:2.5px;height:40px;background:#c9edf1;"></div>
<div style="left:1486.5px;top:849.5px;width:3px;height:40px;background:#c9edf1;"></div>
<div style="left:1491px;top:849.5px;width:2.5px;height:40px;background:#c9edf1;"></div>
<div style="left:1494.5px;top:849.5px;width:2px;height:40px;background:#c9edf1;"></div>
<div style="left:1522.5px;top:849.5px;width:1.5px;height:40px;background:#c9edf1;"></div>
<div style="left:1525.5px;top:849.5px;width:2px;height:40px;background:#c9edf1;"></div>
<div style="left:1529px;top:849.5px;width:1.2px;height:40px;background:#c9edf1;"></div>
<div style="left:1531.5px;top:849.5px;width:2.5px;height:40px;background:#c9edf1;"></div>
<div style="left:1535.5px;top:849.5px;width:1.5px;height:40px;background:#c9edf1;"></div>
<div style="left:1538.5px;top:849.5px;width:2px;height:40px;background:#c9edf1;"></div>
<div style="left:774.5px;top:892px;width:666.2px;height:40px;background:#c9edf1;"></div>
<div style="left:1442.3px;top:892px;width:8.7px;height:40px;background:#c9edf1;"></div>
<div style="left:1454.5px;top:892px;width:1.5px;height:40px;background:#c9edf1;"></div>
<div style="left:1457.5px;top:892px;width:2.5px;height:40px;background:#c9edf1;"></div>
<div style="left:1461.5px;top:892px;width:1.5px;height:40px;background:#c9edf1;"></div>
<div style="left:1464.5px;top:892px;width:1.8px;height:40px;background:#f4cf4a;"></div>
<div style="left:1468px;top:892px;width:2.5px;height:40px;background:#c9edf1;"></div>
<div style="left:1470.3px;top:892px;width:1.6px;height:40px;background:#f4cf4a;"></div>
<div style="left:1473.5px;top:892px;width:2.5px;height:40px;background:#c9edf1;"></div>
<div style="left:1477.5px;top:892px;width:3.5px;height:40px;background:#dcf3d0;"></div>
<div style="left:1482.5px;top:892px;width:2.5px;height:40px;background:#c9edf1;"></div>
<div style="left:1486.5px;top:892px;width:3px;height:40px;background:#c9edf1;"></div>
<div style="left:1491px;top:892px;width:2.5px;height:40px;background:#c9edf1;"></div>
<div style="left:1494.5px;top:892px;width:2px;height:40px;background:#c9edf1;"></div>
<div style="left:774.5px;top:934.5px;width:666.2px;height:40px;background:#c9edf1;"></div>
<div style="left:1442.3px;top:934.5px;width:8.7px;height:40px;background:#c9edf1;"></div>
<div style="left:1454.5px;top:934.5px;width:1.5px;height:40px;background:#c9edf1;"></div>
<div style="left:1457.5px;top:934.5px;width:2.5px;height:40px;background:#c9edf1;"></div>
<div style="left:1461.5px;top:934.5px;width:1.5px;height:40px;background:#c9edf1;"></div>
<div style="left:1464.5px;top:934.5px;width:1.8px;height:40px;background:#f4cf4a;"></div>
<div style="left:1468px;top:934.5px;width:2.5px;height:40px;background:#c9edf1;"></div>
<div style="left:1470.3px;top:934.5px;width:1.6px;height:40px;background:#f4cf4a;"></div>
<div style="left:1473.5px;top:934.5px;width:2.5px;height:40px;background:#c9edf1;"></div>
<div style="left:1477.5px;top:934.5px;width:3.5px;height:40px;background:#dcf3d0;"></div>
<div style="left:1482.5px;top:934.5px;width:2.5px;height:40px;background:#c9edf1;"></div>
<div style="left:1486.5px;top:934.5px;width:3px;height:40px;background:#c9edf1;"></div>
<div style="left:1491px;top:934.5px;width:2.5px;height:40px;background:#c9edf1;"></div>
<div style="left:1494.5px;top:934.5px;width:2px;height:40px;background:#c9edf1;"></div>
<div style="left:774.5px;top:977px;width:666.2px;height:40px;background:#c9edf1;"></div>
<div style="left:1442.3px;top:977px;width:8.7px;height:40px;background:#c9edf1;"></div>
<div style="left:1454.5px;top:977px;width:1.5px;height:40px;background:#c9edf1;"></div>
<div style="left:1457.5px;top:977px;width:2.5px;height:40px;background:#c9edf1;"></div>
<div style="left:1461.5px;top:977px;width:1.5px;height:40px;background:#c9edf1;"></div>
<div style="left:1464.5px;top:977px;width:1.8px;height:40px;background:#f4cf4a;"></div>
<div style="left:1468px;top:977px;width:2.5px;height:40px;background:#c9edf1;"></div>
<div style="left:1470.3px;top:977px;width:1.6px;height:40px;background:#f4cf4a;"></div>
<div style="left:1473.5px;top:977px;width:2.5px;height:40px;background:#c9edf1;"></div>
<div style="left:1477.5px;top:977px;width:3.5px;height:40px;background:#dcf3d0;"></div>
<div style="left:1482.5px;top:977px;width:2.5px;height:40px;background:#c9edf1;"></div>
<div style="left:1486.5px;top:977px;width:3px;height:40px;background:#c9edf1;"></div>
<div style="left:1491px;top:977px;width:2.5px;height:40px;background:#c9edf1;"></div>
<div style="left:1494.5px;top:977px;width:2px;height:40px;background:#c9edf1;"></div>
<div style="left:1502.5px;top:892px;width:6.2px;height:40px;background:#c78ef2;"></div>
<div style="left:1510.5px;top:892px;width:7.5px;height:40px;background:#c78ef2;"></div>
<div style="left:1527px;top:892px;width:1.2px;height:40px;background:#f3ecdf;"></div>
<div style="left:1507px;top:934.5px;width:1px;height:40px;background:#9fb8f5;"></div>
<div style="left:1509.5px;top:934.5px;width:1.5px;height:40px;background:#f4cf4a;"></div>
<div style="left:1517px;top:934.5px;width:1.5px;height:40px;background:#f4cf4a;"></div>
<div style="left:1499px;top:934.5px;width:1.5px;height:40px;background:#c9edf1;"></div>
<div style="left:1520px;top:977px;width:2px;height:40px;background:#c9edf1;"></div>
<div style="left:1523.5px;top:977px;width:2.5px;height:40px;background:#c9edf1;"></div>
<div style="left:1527.5px;top:977px;width:2px;height:40px;background:#c9edf1;"></div>
<div style="left:1531px;top:977px;width:2.5px;height:40px;background:#c9edf1;"></div>
<div style="left:1535px;top:977px;width:1.5px;height:40px;background:#c9edf1;"></div>
<div style="left:1538px;top:977px;width:2px;height:40px;background:#c9edf1;"></div>
<div style="left:1443px;top:1019.5px;width:8px;height:40px;background:#c9edf1;"></div>
<div style="left:1454.5px;top:1019.5px;width:1.5px;height:40px;background:#c9edf1;"></div>
<div style="left:1457.5px;top:1019.5px;width:2.5px;height:40px;background:#c9edf1;"></div>
<div style="left:1461.5px;top:1019.5px;width:1.5px;height:40px;background:#c9edf1;"></div>
<div style="left:1464.5px;top:1019.5px;width:1.8px;height:40px;background:#f4cf4a;"></div>
<div style="left:1468px;top:1019.5px;width:2.5px;height:40px;background:#c9edf1;"></div>
<div style="left:1470.3px;top:1019.5px;width:1.6px;height:40px;background:#f4cf4a;"></div>
<div style="left:1473.5px;top:1019.5px;width:2.5px;height:40px;background:#c9edf1;"></div>
<div style="left:1477.5px;top:1019.5px;width:3.5px;height:40px;background:#dcf3d0;"></div>
<div style="left:1482.5px;top:1019.5px;width:2.5px;height:40px;background:#c9edf1;"></div>
<div style="left:1486.5px;top:1019.5px;width:3px;height:40px;background:#c9edf1;"></div>
<div style="left:1491px;top:1019.5px;width:2.5px;height:40px;background:#c9edf1;"></div>
<div style="left:1494.5px;top:1019.5px;width:2px;height:40px;background:#c9edf1;"></div>
<div style="left:1499px;top:1019.5px;width:1.6px;height:40px;background:#f4cf4a;"></div>
<div style="left:1524px;top:1019.5px;width:2.5px;height:40px;background:#c9edf1;"></div>
<div style="left:1528px;top:1019.5px;width:2.5px;height:40px;background:#c9edf1;"></div>
<div style="left:1532px;top:1019.5px;width:2.5px;height:40px;background:#c9edf1;"></div>
<div style="left:1536px;top:1019.5px;width:2px;height:40px;background:#c9edf1;"></div>
<div style="left:775px;top:1017.5px;width:667px;height:45.5px;background:#f4cf4a;border:5.5px solid #202022;box-sizing:border-box;"></div>
<div style="left:774.5px;top:1062px;width:666.8px;height:40px;background:#f4cf4a;"></div>
<div style="left:1442.6px;top:1062px;width:8.1px;height:40px;background:#f4cf4a;"></div>
<div style="left:1454.5px;top:1062px;width:1.2px;height:40px;background:#c9edf1;"></div>
<div style="left:1457px;top:1062px;width:1.4px;height:40px;background:#f4cf4a;"></div>
<div style="left:1460.5px;top:1062px;width:3.5px;height:40px;background:#c9edf1;"></div>
<div style="left:1466.5px;top:1062px;width:2px;height:40px;background:#c9edf1;"></div>
<div style="left:1469.5px;top:1062px;width:1.6px;height:40px;background:#f4cf4a;"></div>
<div style="left:1473.5px;top:1062px;width:2.5px;height:40px;background:#c9edf1;"></div>
<div style="left:1477.5px;top:1062px;width:3.5px;height:40px;background:#dcf3d0;"></div>
<div style="left:1482.5px;top:1062px;width:2.5px;height:40px;background:#c9edf1;"></div>
<div style="left:1486.5px;top:1062px;width:3px;height:40px;background:#c9edf1;"></div>
<div style="left:1491px;top:1062px;width:2.5px;height:40px;background:#c9edf1;"></div>
<div style="left:1494.5px;top:1062px;width:2px;height:40px;background:#c9edf1;"></div>
<div style="left:1524px;top:1062px;width:2.5px;height:40px;background:#c9edf1;"></div>
<div style="left:1528px;top:1062px;width:2.5px;height:40px;background:#c9edf1;"></div>
<div style="left:1532px;top:1062px;width:2.5px;height:40px;background:#c9edf1;"></div>
<div style="left:1536px;top:1062px;width:2px;height:40px;background:#c9edf1;"></div>
<div style="left:774.5px;top:1104.5px;width:378.5px;height:40px;background:#c9edf1;"></div>
<div style="left:1154.7px;top:1104.5px;width:286.3px;height:40px;background:#c9edf1;"></div>
<div style="left:1442.5px;top:1104.5px;width:8.2px;height:40px;background:#f4cf4a;"></div>
<div style="left:1452px;top:1104.5px;width:1px;height:40px;background:#f3ecdf;"></div>
<div style="left:1458px;top:1104.5px;width:3.5px;height:40px;background:#c9edf1;"></div>
<div style="left:1464px;top:1104.5px;width:2px;height:40px;background:#c9edf1;"></div>
<div style="left:1467.5px;top:1104.5px;width:2.5px;height:40px;background:#c9edf1;"></div>
<div style="left:1471px;top:1104.5px;width:2.5px;height:40px;background:#c9edf1;"></div>
<div style="left:1475px;top:1104.5px;width:3.5px;height:40px;background:#dcf3d0;"></div>
<div style="left:1480px;top:1104.5px;width:2.5px;height:40px;background:#c9edf1;"></div>
<div style="left:1484px;top:1104.5px;width:1.4px;height:40px;background:#f4cf4a;"></div>
<div style="left:1486px;top:1104.5px;width:2px;height:40px;background:#c9edf1;"></div>
<div style="left:1490px;top:1104.5px;width:2.5px;height:40px;background:#c9edf1;"></div>
<div style="left:1494px;top:1104.5px;width:2px;height:40px;background:#c9edf1;"></div>
<div style="left:1524px;top:1104.5px;width:2.5px;height:40px;background:#c9edf1;"></div>
<div style="left:1528px;top:1104.5px;width:2.5px;height:40px;background:#c9edf1;"></div>
<div style="left:1532px;top:1104.5px;width:2.5px;height:40px;background:#c9edf1;"></div>
<div style="left:1536px;top:1104.5px;width:2px;height:40px;background:#c9edf1;"></div>
<div style="left:774.5px;top:1147px;width:380.5px;height:40px;background:#c9edf1;"></div>
<div style="left:1443.5px;top:1147px;width:7.2px;height:40px;background:#c9edf1;"></div>
<div style="left:1454px;top:1147px;width:1.4px;height:40px;background:#f4cf4a;"></div>
<div style="left:1458px;top:1147px;width:3.5px;height:40px;background:#c9edf1;"></div>
<div style="left:1464px;top:1147px;width:2px;height:40px;background:#c9edf1;"></div>
<div style="left:1467.5px;top:1147px;width:2.5px;height:40px;background:#c9edf1;"></div>
<div style="left:1471px;top:1147px;width:2.5px;height:40px;background:#c9edf1;"></div>
<div style="left:1475px;top:1147px;width:3.5px;height:40px;background:#dcf3d0;"></div>
<div style="left:1480px;top:1147px;width:2.5px;height:40px;background:#c9edf1;"></div>
<div style="left:1484px;top:1147px;width:1.4px;height:40px;background:#f4cf4a;"></div>
<div style="left:1486px;top:1147px;width:2px;height:40px;background:#c9edf1;"></div>
<div style="left:1490px;top:1147px;width:2.5px;height:40px;background:#c9edf1;"></div>
<div style="left:1494px;top:1147px;width:2px;height:40px;background:#c9edf1;"></div>
<div style="left:1524px;top:1147px;width:2.5px;height:40px;background:#c9edf1;"></div>
<div style="left:1528px;top:1147px;width:2.5px;height:40px;background:#c9edf1;"></div>
<div style="left:1532px;top:1147px;width:1.4px;height:40px;background:#f4cf4a;"></div>
<div style="left:1536px;top:1147px;width:2px;height:40px;background:#c9edf1;"></div>
<div style="left:774.5px;top:1189.5px;width:380.5px;height:40px;background:#c9edf1;"></div>
<div style="left:1443.5px;top:1189.5px;width:7.2px;height:40px;background:#c9edf1;"></div>
<div style="left:1454px;top:1189.5px;width:1.4px;height:40px;background:#c9edf1;"></div>
<div style="left:1458px;top:1189.5px;width:3.5px;height:40px;background:#c9edf1;"></div>
<div style="left:1464px;top:1189.5px;width:2px;height:40px;background:#c9edf1;"></div>
<div style="left:1467.5px;top:1189.5px;width:2.5px;height:40px;background:#c9edf1;"></div>
<div style="left:1471px;top:1189.5px;width:2.5px;height:40px;background:#c9edf1;"></div>
<div style="left:1475px;top:1189.5px;width:3.5px;height:40px;background:#dcf3d0;"></div>
<div style="left:1480px;top:1189.5px;width:2.5px;height:40px;background:#c9edf1;"></div>
<div style="left:1484px;top:1189.5px;width:1.4px;height:40px;background:#c9edf1;"></div>
<div style="left:1486px;top:1189.5px;width:2px;height:40px;background:#c9edf1;"></div>
<div style="left:1490px;top:1189.5px;width:2.5px;height:40px;background:#c9edf1;"></div>
<div style="left:1494px;top:1189.5px;width:2px;height:40px;background:#c9edf1;"></div>
<div style="left:1524px;top:1189.5px;width:2.5px;height:40px;background:#c9edf1;"></div>
<div style="left:1528px;top:1189.5px;width:2.5px;height:40px;background:#c9edf1;"></div>
<div style="left:1532px;top:1189.5px;width:2px;height:40px;background:#c9edf1;"></div>
<div style="left:1536px;top:1189.5px;width:2px;height:40px;background:#c9edf1;"></div>
<div style="left:774.5px;top:1232px;width:381px;height:40px;background:#f4cf4a;"></div>
<div style="left:1443.5px;top:1232px;width:7.2px;height:40px;background:#c9edf1;"></div>
<div style="left:1458px;top:1232px;width:3.5px;height:40px;background:#c9edf1;"></div>
<div style="left:1464px;top:1232px;width:1.4px;height:40px;background:#f4cf4a;"></div>
<div style="left:1466px;top:1232px;width:1.4px;height:40px;background:#f4cf4a;"></div>
<div style="left:1468.5px;top:1232px;width:2.5px;height:40px;background:#c9edf1;"></div>
<div style="left:1471.5px;top:1232px;width:2.5px;height:40px;background:#c9edf1;"></div>
<div style="left:1475px;top:1232px;width:2px;height:40px;background:#c9edf1;"></div>
<div style="left:1478px;top:1232px;width:1.4px;height:40px;background:#f4cf4a;"></div>
<div style="left:1480.5px;top:1232px;width:2.5px;height:40px;background:#c9edf1;"></div>
<div style="left:1484px;top:1232px;width:3px;height:40px;background:#c9edf1;"></div>
<div style="left:1488.5px;top:1232px;width:2.5px;height:40px;background:#c9edf1;"></div>
<div style="left:1492px;top:1232px;width:2px;height:40px;background:#c9edf1;"></div>
<div style="left:1526px;top:1232px;width:2.5px;height:40px;background:#c9edf1;"></div>
<div style="left:1530px;top:1232px;width:2.5px;height:40px;background:#dcf3d0;"></div>
<div style="left:1534px;top:1232px;width:2.5px;height:40px;background:#c9edf1;"></div>
<div style="left:774.5px;top:1274.5px;width:380.5px;height:17.5px;background:#c9edf1;"></div>
<div style="left:1443.5px;top:1274.5px;width:7.2px;height:17.5px;background:#c9edf1;"></div>
<div style="left:1458px;top:1274.5px;width:3.5px;height:17.5px;background:#c9edf1;"></div>
<div style="left:1464px;top:1274.5px;width:2px;height:17.5px;background:#c9edf1;"></div>
<div style="left:1472px;top:1274.5px;width:3px;height:17.5px;background:#f4cf4a;"></div>
<div style="left:1477px;top:1274.5px;width:1.4px;height:17.5px;background:#f4cf4a;"></div>
<div style="left:1480.5px;top:1274.5px;width:2.5px;height:17.5px;background:#c9edf1;"></div>
<div style="left:1484px;top:1274.5px;width:3px;height:17.5px;background:#c9edf1;"></div>
<div style="left:1488.5px;top:1274.5px;width:2.5px;height:17.5px;background:#c9edf1;"></div>
<div style="left:1492px;top:1274.5px;width:2px;height:17.5px;background:#c9edf1;"></div>
<div style="left:1526px;top:1274.5px;width:2.5px;height:17.5px;background:#c9edf1;"></div>
<div style="left:1530px;top:1274.5px;width:1.4px;height:17.5px;background:#f4cf4a;"></div>
<div style="left:1534px;top:1274.5px;width:2.5px;height:17.5px;background:#c9edf1;"></div>
<div style="left:707px;top:552px;width:838.5px;height:43px;background:#cfc083;"></div>
<svg style="left:1528px;top:557px;" width="12" height="12" viewBox="0 0 12 12"><path d="M0 0 H12 V12 Z" fill="#d25b5e"/></svg>
<div class="t" style="left:719.40px;top:554.43px;font-size:28.1875px;line-height:36px;color:#4a5773;letter-spacing:0.543px;">Fire idle callback</div>
<div class="t" style="left:764.90px;top:596.93px;font-size:28.1875px;line-height:36px;color:#2a2a2a;letter-spacing:0.426px;">Run microtasks</div>
<div class="t" style="left:786.90px;top:639.43px;font-size:28.1875px;line-height:36px;color:#2a2a2a;letter-spacing:0.445px;">yka</div>
<div class="t" style="left:786.90px;top:681.93px;font-size:28.1875px;line-height:36px;color:#2a2a2a;letter-spacing:0.518px;">(anonymous)</div>
<div class="t" style="left:786.90px;top:724.43px;font-size:28.1875px;line-height:36px;color:#2a2a2a;letter-spacing:0.457px;">rla</div>
<div class="t" style="left:786.90px;top:766.93px;font-size:28.1875px;line-height:36px;color:#2a2a2a;letter-spacing:0.555px;">vla</div>
<div class="t" style="left:786.90px;top:809.43px;font-size:28.1875px;line-height:36px;color:#2a2a2a;letter-spacing:0.518px;">(anonymous)</div>
<div class="t" style="left:786.90px;top:851.93px;font-size:28.1875px;line-height:36px;color:#2a2a2a;letter-spacing:0.518px;">(anonymous)</div>
<div class="t" style="left:786.90px;top:894.43px;font-size:28.1875px;line-height:36px;color:#2a2a2a;letter-spacing:1.055px;">klb</div>
<div class="t" style="left:786.90px;top:936.93px;font-size:28.1875px;line-height:36px;color:#2a2a2a;letter-spacing:1.476px;">flb</div>
<div class="t" style="left:786.90px;top:979.43px;font-size:28.1875px;line-height:36px;color:#2a2a2a;letter-spacing:0.999px;">jlb</div>
<div class="t" style="left:786.90px;top:1021.93px;font-size:28.1875px;line-height:36px;color:#3a3238;letter-spacing:1.049px;">Event: yt-page-data-fetched</div>
<div class="t" style="left:786.90px;top:1064.43px;font-size:28.1875px;line-height:36px;color:#2a2a2a;letter-spacing:0.651px;">Function call</div>
<div class="t" style="left:786.90px;top:1106.93px;font-size:28.1875px;line-height:36px;color:#2a2a2a;letter-spacing:0.518px;">(anonymous)</div>
<div class="t" style="left:786.90px;top:1149.43px;font-size:28.1875px;line-height:36px;color:#2a2a2a;letter-spacing:0.518px;">(anonymous)</div>
<div class="t" style="left:786.90px;top:1191.93px;font-size:28.1875px;line-height:36px;color:#2a2a2a;letter-spacing:0.518px;">(anonymous)</div>
<div class="t" style="left:1167.90px;top:1106.93px;font-size:28.1875px;line-height:36px;color:#4a3f49;letter-spacing:0.427px;">(anonymous)</div>
<svg style="left:1411px;top:1117px;" width="20" height="15" viewBox="0 0 20 15"><path d="M1 1 H19 L10 14 Z" fill="#5c4d57"/></svg>
<div class="t" style="left:786.90px;top:1234.43px;font-size:28.1875px;line-height:36px;color:#8c8c8c;letter-spacing:0.581px;">On ignore list</div>
<div style="left:780px;top:1274.5px;width:200px;height:17.5px;overflow:hidden;"><div class="t" style="left:7px;top:4px;font-size:27.5px;line-height:36px;color:#2a2a2a;">o</div></div>
<div style="left:597px;top:572.2px;width:95px;height:1.6px;background:#7d4e52;"></div>
<svg style="left:688px;top:560px;" width="18" height="26" viewBox="0 0 18 26"><path d="M1.5 5.5 L16 13 L1.5 20.5 Z" fill="#7d4e52"/></svg>
<div style="left:1546px;top:552px;width:1.5px;height:40px;background:#f4cf4a;"></div>
<div style="left:1548.5px;top:552px;width:2px;height:40px;background:#f4cf4a;"></div>
<div style="left:1551.5px;top:552px;width:1.5px;height:40px;background:#f4cf4a;"></div>
<div style="left:1555px;top:552px;width:1.2px;height:40px;background:#9fb8f5;"></div>
<div style="left:1560px;top:552px;width:8px;height:40px;background:#c78ef2;"></div>
<div style="left:1569px;top:552px;width:1.2px;height:40px;background:#9fb8f5;"></div>
<div style="left:1572px;top:552px;width:2px;height:40px;background:#f4cf4a;"></div>
<div style="left:1575px;top:552px;width:3px;height:40px;background:#f4cf4a;"></div>
<div style="left:1579px;top:552px;width:1.5px;height:40px;background:#f4cf4a;"></div>
<div style="left:1581.5px;top:552px;width:2.5px;height:40px;background:#f4cf4a;"></div>
<div style="left:1585px;top:552px;width:1.5px;height:40px;background:#f4cf4a;"></div>
<div style="left:1587.5px;top:552px;width:2px;height:40px;background:#f4cf4a;"></div>
<div style="left:1590.5px;top:552px;width:1.5px;height:40px;background:#f4cf4a;"></div>
<div style="left:1593px;top:552px;width:2.5px;height:40px;background:#f4cf4a;"></div>
<div style="left:1546px;top:594.5px;width:1.5px;height:40px;background:#c9edf1;"></div>
<div style="left:1549px;top:594.5px;width:2px;height:40px;background:#c9edf1;"></div>
<div style="left:1553px;top:594.5px;width:2px;height:40px;background:#c9edf1;"></div>
<div style="left:1562px;top:594.5px;width:1.5px;height:40px;background:#f4cf4a;"></div>
<div style="left:1564.2px;top:594.5px;width:1.5px;height:40px;background:#f4cf4a;"></div>
<div style="left:1566.5px;top:594.5px;width:1.5px;height:40px;background:#f4cf4a;"></div>
<div style="left:1573px;top:594.5px;width:1.2px;height:40px;background:#c9edf1;"></div>
<div style="left:1577px;top:594.5px;width:2px;height:40px;background:#c9edf1;"></div>
<div style="left:1580px;top:594.5px;width:1.2px;height:40px;background:#c9edf1;"></div>
<div style="left:1587px;top:594.5px;width:2px;height:40px;background:#c9edf1;"></div>
<div style="left:1590.5px;top:594.5px;width:2px;height:40px;background:#c9edf1;"></div>
<div style="left:1594px;top:594.5px;width:2px;height:40px;background:#c9edf1;"></div>
<div style="left:1546px;top:637px;width:1.5px;height:40px;background:#c9edf1;"></div>
<div style="left:1549px;top:637px;width:2px;height:40px;background:#c9edf1;"></div>
<div style="left:1553px;top:637px;width:2px;height:40px;background:#c9edf1;"></div>
<div style="left:1573px;top:637px;width:1.2px;height:40px;background:#c9edf1;"></div>
<div style="left:1577px;top:637px;width:2px;height:40px;background:#c9edf1;"></div>
<div style="left:1580px;top:637px;width:1.2px;height:40px;background:#c9edf1;"></div>
<div style="left:1587px;top:637px;width:2px;height:40px;background:#c9edf1;"></div>
<div style="left:1590.5px;top:637px;width:2px;height:40px;background:#c9edf1;"></div>
<div style="left:1594px;top:637px;width:2px;height:40px;background:#c9edf1;"></div>
<div style="left:1546px;top:679.5px;width:1.5px;height:40px;background:#c9edf1;"></div>
<div style="left:1549px;top:679.5px;width:2px;height:40px;background:#c9edf1;"></div>
<div style="left:1553px;top:679.5px;width:2px;height:40px;background:#c9edf1;"></div>
<div style="left:1577px;top:679.5px;width:2px;height:40px;background:#c9edf1;"></div>
<div style="left:1580px;top:679.5px;width:1.2px;height:40px;background:#c9edf1;"></div>
<div style="left:1587px;top:679.5px;width:2px;height:40px;background:#c9edf1;"></div>
<div style="left:1590.5px;top:679.5px;width:2px;height:40px;background:#c9edf1;"></div>
<div style="left:1594px;top:679.5px;width:2px;height:40px;background:#c9edf1;"></div>
<div style="left:1546px;top:722px;width:1.5px;height:40px;background:#c9edf1;"></div>
<div style="left:1549px;top:722px;width:2px;height:40px;background:#c9edf1;"></div>
<div style="left:1553px;top:722px;width:2px;height:40px;background:#c9edf1;"></div>
<div style="left:1577px;top:722px;width:2px;height:40px;background:#c9edf1;"></div>
<div style="left:1580px;top:722px;width:1.2px;height:40px;background:#c9edf1;"></div>
<div style="left:1587px;top:722px;width:2px;height:40px;background:#c9edf1;"></div>
<div style="left:1590.5px;top:722px;width:2px;height:40px;background:#c9edf1;"></div>
<div style="left:1594px;top:722px;width:2px;height:40px;background:#c9edf1;"></div>
<div style="left:1547.5px;top:764.5px;width:1.4px;height:40px;background:#f4cf4a;"></div>
<div style="left:1552px;top:764.5px;width:1.2px;height:40px;background:#c78ef2;"></div>
<div style="left:1577px;top:764.5px;width:2px;height:40px;background:#c9edf1;"></div>
<div style="left:1580px;top:764.5px;width:1.2px;height:40px;background:#c9edf1;"></div>
<div style="left:1587px;top:764.5px;width:2px;height:40px;background:#c9edf1;"></div>
<div style="left:1590.5px;top:764.5px;width:2px;height:40px;background:#c9edf1;"></div>
<div style="left:1594px;top:764.5px;width:2px;height:40px;background:#c9edf1;"></div>
<div style="left:1546px;top:807px;width:1.2px;height:40px;background:#c9edf1;"></div>
<div style="left:1552px;top:807px;width:1.4px;height:40px;background:#f4cf4a;"></div>
<div style="left:1577px;top:807px;width:2px;height:40px;background:#c9edf1;"></div>
<div style="left:1580px;top:807px;width:1.2px;height:40px;background:#c9edf1;"></div>
<div style="left:1587px;top:807px;width:2px;height:40px;background:#c9edf1;"></div>
<div style="left:1590.5px;top:807px;width:2px;height:40px;background:#c9edf1;"></div>
<div style="left:1594px;top:807px;width:2px;height:40px;background:#c9edf1;"></div>
<div style="left:1546px;top:849.5px;width:1.2px;height:40px;background:#c9edf1;"></div>
<div style="left:1555px;top:849.5px;width:1.2px;height:40px;background:#c9edf1;"></div>
<div style="left:1577px;top:849.5px;width:1.5px;height:40px;background:#c9edf1;"></div>
<div style="left:1580px;top:849.5px;width:1.2px;height:40px;background:#c9edf1;"></div>
<div style="left:1588px;top:849.5px;width:2px;height:40px;background:#c9edf1;"></div>
<div style="left:1591.5px;top:849.5px;width:1.2px;height:40px;background:#c9edf1;"></div>
<div style="left:1594px;top:849.5px;width:1.5px;height:40px;background:#c9edf1;"></div>
<div style="left:1546px;top:892px;width:1.2px;height:40px;background:#c9edf1;"></div>
<div style="left:1555px;top:892px;width:1.2px;height:40px;background:#c9edf1;"></div>
<div style="left:1577px;top:892px;width:1.5px;height:40px;background:#c9edf1;"></div>
<div style="left:1580px;top:892px;width:1.2px;height:40px;background:#c9edf1;"></div>
<div style="left:1588px;top:892px;width:2px;height:40px;background:#c9edf1;"></div>
<div style="left:1591.5px;top:892px;width:1.2px;height:40px;background:#c9edf1;"></div>
<div style="left:1594px;top:892px;width:1.5px;height:40px;background:#c9edf1;"></div>
<div style="left:1546px;top:934.5px;width:1.2px;height:40px;background:#c9edf1;"></div>
<div style="left:1555px;top:934.5px;width:1.2px;height:40px;background:#c9edf1;"></div>
<div style="left:1577px;top:934.5px;width:1.5px;height:40px;background:#c9edf1;"></div>
<div style="left:1580px;top:934.5px;width:1.2px;height:40px;background:#c9edf1;"></div>
<div style="left:1588px;top:934.5px;width:2px;height:40px;background:#c9edf1;"></div>
<div style="left:1591.5px;top:934.5px;width:1.2px;height:40px;background:#c9edf1;"></div>
<div style="left:1594px;top:934.5px;width:1.5px;height:40px;background:#c9edf1;"></div>
<div style="left:1546px;top:977px;width:1.2px;height:40px;background:#c9edf1;"></div>
<div style="left:1555px;top:977px;width:1.2px;height:40px;background:#c9edf1;"></div>
<div style="left:1577px;top:977px;width:1.5px;height:40px;background:#c9edf1;"></div>
<div style="left:1580px;top:977px;width:1.2px;height:40px;background:#c9edf1;"></div>
<div style="left:1588px;top:977px;width:2px;height:40px;background:#c9edf1;"></div>
<div style="left:1591.5px;top:977px;width:1.2px;height:40px;background:#c9edf1;"></div>
<div style="left:1594px;top:977px;width:1.5px;height:40px;background:#c9edf1;"></div>
<div style="left:1546px;top:1019.5px;width:1.2px;height:40px;background:#c9edf1;"></div>
<div style="left:1555px;top:1019.5px;width:1.2px;height:40px;background:#c9edf1;"></div>
<div style="left:1577px;top:1019.5px;width:1.5px;height:40px;background:#c9edf1;"></div>
<div style="left:1580px;top:1019.5px;width:1.2px;height:40px;background:#c9edf1;"></div>
<div style="left:1588px;top:1019.5px;width:2px;height:40px;background:#c9edf1;"></div>
<div style="left:1591.5px;top:1019.5px;width:1.2px;height:40px;background:#c9edf1;"></div>
<div style="left:1594px;top:1019.5px;width:1.5px;height:40px;background:#c9edf1;"></div>
<div style="left:1546px;top:1062px;width:1.2px;height:40px;background:#c9edf1;"></div>
<div style="left:1577px;top:1062px;width:1.4px;height:40px;background:#f4cf4a;"></div>
<div style="left:1590px;top:1062px;width:1.2px;height:40px;background:#c9edf1;"></div>
<div style="left:1594px;top:1062px;width:1.5px;height:40px;background:#c9edf1;"></div>
<div style="left:1546px;top:1104.5px;width:1.2px;height:40px;background:#c9edf1;"></div>
<div style="left:1577px;top:1104.5px;width:1.2px;height:40px;background:#9fb8f5;"></div>
<div style="left:1590px;top:1104.5px;width:1.2px;height:40px;background:#c9edf1;"></div>
<div style="left:1594px;top:1104.5px;width:1.5px;height:40px;background:#c9edf1;"></div>
<div style="left:1546px;top:1147px;width:1.2px;height:40px;background:#c9edf1;"></div>
<div style="left:1590px;top:1147px;width:1.2px;height:40px;background:#c9edf1;"></div>
<div style="left:1594px;top:1147px;width:1.5px;height:40px;background:#c9edf1;"></div>
<div style="left:1546px;top:1189.5px;width:1.2px;height:40px;background:#c9edf1;"></div>
<div style="left:1590px;top:1189.5px;width:1.2px;height:40px;background:#c9edf1;"></div>
<div style="left:1594px;top:1189.5px;width:1.5px;height:40px;background:#c9edf1;"></div>
<div style="left:1590px;top:1232px;width:1.2px;height:40px;background:#c9edf1;"></div>
<div style="left:1590px;top:1274.5px;width:1.2px;height:17.5px;background:#c9edf1;"></div>
<div style="left:1597px;top:552px;width:68.7px;height:40px;background:#f4cf4a;"></div>
<div style="left:1669.5px;top:552px;width:1.5px;height:40px;background:#f4cf4a;"></div>
<div style="left:1597px;top:594.5px;width:68.7px;height:40px;background:#c9edf1;"></div>
<div style="left:1667px;top:594.5px;width:1px;height:40px;background:#dcf3f5;"></div>
<div style="left:1597px;top:637px;width:68.7px;height:40px;background:#c9edf1;"></div>
<div style="left:1667px;top:637px;width:1px;height:40px;background:#dcf3f5;"></div>
<div style="left:1597px;top:679.5px;width:68.7px;height:40px;background:#c9edf1;"></div>
<div style="left:1667px;top:679.5px;width:1px;height:40px;background:#dcf3f5;"></div>
<div style="left:1597px;top:722px;width:68.7px;height:40px;background:#c9edf1;"></div>
<div style="left:1667px;top:722px;width:1px;height:40px;background:#dcf3f5;"></div>
<div style="left:1597px;top:764.5px;width:68.7px;height:40px;background:#c9edf1;"></div>
<div style="left:1667px;top:764.5px;width:1px;height:40px;background:#dcf3f5;"></div>
<div style="left:1597px;top:807px;width:68.7px;height:40px;background:#c9edf1;"></div>
<div style="left:1667px;top:807px;width:1px;height:40px;background:#dcf3f5;"></div>
<div style="left:1597px;top:849.5px;width:23.5px;height:40px;background:#c9edf1;"></div>
<div style="left:1622px;top:849.5px;width:43px;height:40px;background:#c9edf1;"></div>
<div style="left:1667px;top:849.5px;width:1px;height:40px;background:#c9f5b9;"></div>
<div style="left:1624.5px;top:892px;width:1px;height:40px;background:#dcf3f5;"></div>
<div style="left:1626.5px;top:892px;width:1px;height:40px;background:#dcf3f5;"></div>
<div style="left:1629px;top:892px;width:34px;height:40px;background:#c9edf1;"></div>
<div style="left:1664px;top:892px;width:1.5px;height:40px;background:#dcf3f5;"></div>
<div style="left:1624.5px;top:934.5px;width:1px;height:40px;background:#dcf3f5;"></div>
<div style="left:1626.5px;top:934.5px;width:1px;height:40px;background:#dcf3f5;"></div>
<div style="left:1629px;top:934.5px;width:34px;height:40px;background:#c9edf1;"></div>
<div style="left:1664px;top:934.5px;width:1.5px;height:40px;background:#dcf3f5;"></div>
<div style="left:1667px;top:892px;width:1.3px;height:40px;background:#f4cf4a;"></div>
<div style="left:1624.5px;top:977px;width:1px;height:40px;background:#dcf3f5;"></div>
<div style="left:1629px;top:977px;width:1.5px;height:40px;background:#c9edf1;"></div>
<div style="left:1631.5px;top:977px;width:1.5px;height:40px;background:#c9edf1;"></div>
<div style="left:1634px;top:977px;width:2px;height:40px;background:#c9edf1;"></div>
<div style="left:1637px;top:977px;width:18px;height:40px;background:#c9edf1;"></div>
<div style="left:1656.5px;top:977px;width:8px;height:40px;background:#c9edf1;"></div>
<div style="left:1665px;top:977px;width:1px;height:40px;background:#dcf3f5;"></div>
<div style="left:1667px;top:977px;width:1.3px;height:40px;background:#f4cf4a;"></div>
<div style="left:1629px;top:1019.5px;width:1.5px;height:40px;background:#c9edf1;"></div>
<div style="left:1632px;top:1019.5px;width:1.5px;height:40px;background:#c9edf1;"></div>
<div style="left:1634.5px;top:1019.5px;width:1.5px;height:40px;background:#c9edf1;"></div>
<div style="left:1637px;top:1019.5px;width:2.5px;height:40px;background:#c9edf1;"></div>
<div style="left:1641px;top:1019.5px;width:11px;height:40px;background:#c9edf1;"></div>
<div style="left:1653px;top:1019.5px;width:1px;height:40px;background:#dcf3f5;"></div>
<div style="left:1656.5px;top:1019.5px;width:6px;height:40px;background:#c9edf1;"></div>
<div style="left:1663px;top:1019.5px;width:1px;height:40px;background:#dcf3f5;"></div>
<div style="left:1665px;top:1019.5px;width:1px;height:40px;background:#dcf3f5;"></div>
<div style="left:1629.5px;top:1062px;width:1px;height:40px;background:#dcf3f5;"></div>
<div style="left:1657px;top:1062px;width:1px;height:40px;background:#dcf3f5;"></div>
<div style="left:1659px;top:1062px;width:1.5px;height:40px;background:#c9edf1;"></div>
<div style="left:1661.5px;top:1062px;width:1px;height:40px;background:#dcf3f5;"></div>
<div style="left:1663.5px;top:1062px;width:1.5px;height:40px;background:#c9edf1;"></div>
<div style="left:1659px;top:1104.5px;width:1.5px;height:40px;background:#dcf3f5;"></div>
<div style="left:1664px;top:1104.5px;width:1.5px;height:40px;background:#dcf3f5;"></div>
<div style="left:1659px;top:1147px;width:1.5px;height:40px;background:#dcf3f5;"></div>
<div style="left:1664px;top:1147px;width:1.5px;height:40px;background:#dcf3f5;"></div>
<div style="left:1659px;top:1189.5px;width:1.5px;height:40px;background:#dcf3f5;"></div>
<div style="left:1664px;top:1189.5px;width:1.5px;height:40px;background:#dcf3f5;"></div>
<div style="left:1664px;top:1232px;width:2px;height:40px;background:#f4cf4a;"></div>
<div style="left:1659px;top:1274.5px;width:1px;height:17.5px;background:#dcf3f5;"></div>
<div style="left:1664px;top:1274.5px;width:1px;height:17.5px;background:#dcf3f5;"></div>
<div class="t" style="left:1609.90px;top:554.43px;font-size:28.1875px;line-height:36px;color:#2a2a2a;letter-spacing:-1.412px;">R...</div>
<div class="t" style="left:1609.90px;top:596.93px;font-size:28.1875px;line-height:36px;color:#2a2a2a;">b</div>
<div class="t" style="left:1610.90px;top:639.43px;font-size:28.1875px;line-height:36px;color:#2a2a2a;letter-spacing:-0.414px;">(...)</div>
<div class="t" style="left:1609.90px;top:681.93px;font-size:28.1875px;line-height:36px;color:#2a2a2a;letter-spacing:-0.640px;">Aa</div>
<div class="t" style="left:1610.90px;top:724.43px;font-size:28.1875px;line-height:36px;color:#2a2a2a;letter-spacing:-0.414px;">(...)</div>
<div class="t" style="left:1609.90px;top:766.93px;font-size:28.1875px;line-height:36px;color:#2a2a2a;letter-spacing:-0.524px;">w...</div>
<div class="t" style="left:1610.90px;top:809.43px;font-size:28.1875px;line-height:36px;color:#2a2a2a;letter-spacing:-0.495px;">Er</div>
<div style="left:1704.5px;top:552px;width:1.5px;height:40px;background:#9fb8f5;"></div>
<div style="left:1754px;top:552px;width:1.5px;height:40px;background:#f7dd80;"></div>
<div style="left:1799.5px;top:552px;width:1.2px;height:40px;background:#9fb8f5;"></div>
<div style="left:1801.7px;top:552px;width:1.3px;height:40px;background:#9fb8f5;"></div>
<div style="left:1804px;top:552px;width:1px;height:40px;background:#9fb8f5;"></div>
<div style="left:1807.5px;top:552px;width:11.2px;height:40px;background:#f4cf4a;"></div>
<div style="left:1807.5px;top:594.5px;width:10px;height:40px;background:#dcc2f0;"></div>
<div style="left:1819px;top:594.5px;width:1.3px;height:40px;background:#f4cf4a;"></div>
<div style="left:1821.3px;top:594.5px;width:281.7px;height:40px;background:#f4cf4a;"></div>
<div style="left:1807.5px;top:637px;width:10px;height:40px;background:#dcc2f0;"></div>
<div style="left:1822px;top:637px;width:271px;height:40px;background:#c9edf1;"></div>
<div style="left:2094.5px;top:637px;width:8.5px;height:40px;background:#c9edf1;"></div>
<div style="left:1807.3px;top:679.5px;width:1.2px;height:40px;background:#dcc2f0;"></div>
<div style="left:1809.5px;top:679.5px;width:6px;height:40px;background:#f4cf4a;"></div>
<div style="left:1822px;top:679.5px;width:271px;height:40px;background:#c9edf1;"></div>
<div style="left:2094.5px;top:679.5px;width:8.5px;height:40px;background:#c9edf1;"></div>
<div style="left:1807px;top:722px;width:1.5px;height:40px;background:#f4cf4a;"></div>
<div style="left:1809.5px;top:722px;width:1.5px;height:40px;background:#f4cf4a;"></div>
<div style="left:1822px;top:722px;width:271px;height:40px;background:#c9edf1;"></div>
<div style="left:2094.5px;top:722px;width:8.5px;height:40px;background:#c9edf1;"></div>
<div style="left:1821px;top:764.5px;width:272px;height:40px;background:#c9edf1;"></div>
<div style="left:2094.5px;top:764.5px;width:5px;height:40px;background:#c9edf1;"></div>
<div style="left:2100.5px;top:764.5px;width:2.5px;height:40px;background:#c9edf1;"></div>
<div style="left:1817px;top:807px;width:3.7px;height:40px;background:#f4cf4a;"></div>
<div style="left:1822px;top:807px;width:271px;height:40px;background:#c9edf1;"></div>
<div style="left:2094.5px;top:807px;width:5px;height:40px;background:#c9edf1;"></div>
<div style="left:2100.5px;top:807px;width:1.5px;height:40px;background:#c9edf1;"></div>
<div style="left:2102px;top:807px;width:1.5px;height:40px;background:#f4cf4a;"></div>
<div style="left:1822px;top:849.5px;width:1.2px;height:40px;background:#c9edf1;"></div>
<div style="left:1824.5px;top:849.5px;width:268.5px;height:40px;background:#f3ecdf;"></div>
<div style="left:2096.5px;top:849.5px;width:1.2px;height:40px;background:#dcf3f5;"></div>
<div style="left:2099.5px;top:849.5px;width:1.2px;height:40px;background:#dcf3f5;"></div>
<div style="left:2102px;top:849.5px;width:1px;height:40px;background:#dcf3f5;"></div>
<div style="left:1822px;top:892px;width:1.2px;height:40px;background:#c9edf1;"></div>
<div style="left:1824.5px;top:892px;width:268.5px;height:40px;background:#f3ecdf;"></div>
<div style="left:2096.5px;top:892px;width:1.2px;height:40px;background:#dcf3f5;"></div>
<div style="left:2099.5px;top:892px;width:1.2px;height:40px;background:#dcf3f5;"></div>
<div style="left:2102px;top:892px;width:1px;height:40px;background:#dcf3f5;"></div>
<div style="left:1822px;top:934.5px;width:1.2px;height:40px;background:#c9edf1;"></div>
<div style="left:1824.5px;top:934.5px;width:268.5px;height:40px;background:#f3ecdf;"></div>
<div style="left:2096.5px;top:934.5px;width:1.2px;height:40px;background:#dcf3f5;"></div>
<div style="left:2099.5px;top:934.5px;width:1.2px;height:40px;background:#dcf3f5;"></div>
<div style="left:2102px;top:934.5px;width:1px;height:40px;background:#dcf3f5;"></div>
<div style="left:1822px;top:977px;width:1.2px;height:40px;background:#c9edf1;"></div>
<div style="left:1824.5px;top:977px;width:268.5px;height:40px;background:#f3ecdf;"></div>
<div style="left:2096.5px;top:977px;width:1.2px;height:40px;background:#dcf3f5;"></div>
<div style="left:2099.5px;top:977px;width:1.2px;height:40px;background:#dcf3f5;"></div>
<div style="left:2102px;top:977px;width:1px;height:40px;background:#dcf3f5;"></div>
<div style="left:1822px;top:1019.5px;width:1.2px;height:40px;background:#c9edf1;"></div>
<div style="left:1824.5px;top:1019.5px;width:268.5px;height:40px;background:#f3ecdf;"></div>
<div style="left:2096.5px;top:1019.5px;width:1.2px;height:40px;background:#dcf3f5;"></div>
<div style="left:2099.5px;top:1019.5px;width:1.2px;height:40px;background:#dcf3f5;"></div>
<div style="left:2102px;top:1019.5px;width:1px;height:40px;background:#dcf3f5;"></div>
<div style="left:2104.5px;top:849.5px;width:1.5px;height:40px;background:#f4cf4a;"></div>
<div style="left:2102px;top:977px;width:1.5px;height:40px;background:#f4cf4a;"></div>
<div style="left:2102px;top:1019.5px;width:1.5px;height:40px;background:#f4cf4a;"></div>
<div style="left:1822px;top:1062px;width:1.2px;height:40px;background:#c9edf1;"></div>
<div style="left:1829.3px;top:1062px;width:1.7px;height:40px;background:#f4cf4a;"></div>
<div style="left:1831.5px;top:1062px;width:261.5px;height:40px;background:#f3ecdf;"></div>
<div style="left:2099.5px;top:1062px;width:1px;height:40px;background:#dcf3f5;"></div>
<div style="left:2102px;top:1062px;width:1px;height:40px;background:#ece5d6;"></div>
<div style="left:1822px;top:1104.5px;width:1px;height:40px;background:#dcf3f5;"></div>
<div style="left:1823.8px;top:1104.5px;width:2.2px;height:40px;background:#f4cf4a;"></div>
<div style="left:1827px;top:1104.5px;width:3.5px;height:40px;background:#f4f0e8;"></div>
<div style="left:1831.7px;top:1104.5px;width:261.3px;height:40px;background:#f3ecdf;"></div>
<div style="left:2094.5px;top:1104.5px;width:1.5px;height:40px;background:#9fb8f5;"></div>
<div style="left:1822px;top:1147px;width:2px;height:40px;background:#f4cf4a;"></div>
<div style="left:1824.6px;top:1147px;width:1.4px;height:40px;background:#f4cf4a;"></div>
<div style="left:1826.6px;top:1147px;width:1.4px;height:40px;background:#f4cf4a;"></div>
<div style="left:1829px;top:1147px;width:1.5px;height:40px;background:#f4f0e8;"></div>
<div style="left:1831.7px;top:1147px;width:257px;height:40px;background:#f3ecdf;"></div>
<div style="left:2089.2px;top:1147px;width:1.8px;height:40px;background:#f4cf4a;"></div>
<div style="left:1827px;top:1189.5px;width:3.5px;height:40px;background:#f4f0e8;"></div>
<div style="left:1831.7px;top:1189.5px;width:256.3px;height:40px;background:#f3ecdf;"></div>
<div style="left:2091.5px;top:1189.5px;width:1.2px;height:40px;background:#dcf3f5;"></div>
<div style="left:1827px;top:1232px;width:3.5px;height:40px;background:#f4f0e8;"></div>
<div style="left:1852px;top:1232px;width:2px;height:40px;background:#f4cf4a;"></div>
<div style="left:1854.6px;top:1232px;width:1.4px;height:40px;background:#f4cf4a;"></div>
<div style="left:1857px;top:1232px;width:3.5px;height:40px;background:#ece5d6;"></div>
<div style="left:1862px;top:1232px;width:226.7px;height:40px;background:#f3ecdf;"></div>
<div style="left:2089.3px;top:1232px;width:1.2px;height:40px;background:#dcf3f5;"></div>
<div style="left:2091.2px;top:1232px;width:1.8px;height:40px;background:#f4cf4a;"></div>
<div style="left:1827px;top:1274.5px;width:3.5px;height:17.5px;background:#f4f0e8;"></div>
<div style="left:1857.5px;top:1274.5px;width:8px;height:17.5px;background:#f3ecdf;"></div>
<div style="left:1868px;top:1274.5px;width:1.2px;height:17.5px;background:#f3ecdf;"></div>
<div style="left:1870px;top:1274.5px;width:8px;height:17.5px;background:#f3ecdf;"></div>
<div style="left:1878.8px;top:1274.5px;width:3px;height:17.5px;background:#f3ecdf;"></div>
<div style="left:1882.6px;top:1274.5px;width:1.2px;height:17.5px;background:#f3ecdf;"></div>
<div style="left:1884.6px;top:1274.5px;width:3px;height:17.5px;background:#f3ecdf;"></div>
<div style="left:1890.1px;top:1274.5px;width:1.2px;height:17.5px;background:#f3ecdf;"></div>
<div style="left:1892.1px;top:1274.5px;width:3px;height:17.5px;background:#f3ecdf;"></div>
<div style="left:1895.9px;top:1274.5px;width:1.2px;height:17.5px;background:#f3ecdf;"></div>
<div style="left:1898.1px;top:1274.5px;width:1.2px;height:17.5px;background:#f3ecdf;"></div>
<div style="left:1900.3px;top:1274.5px;width:5px;height:17.5px;background:#f3ecdf;"></div>
<div style="left:1906.3px;top:1274.5px;width:1.5px;height:17.5px;background:#f3ecdf;"></div>
<div style="left:1909.3px;top:1274.5px;width:2px;height:17.5px;background:#f3ecdf;"></div>
<div style="left:1912.3px;top:1274.5px;width:8px;height:17.5px;background:#f3ecdf;"></div>
<div style="left:1921.1px;top:1274.5px;width:1.3px;height:17.5px;background:#f4cf4a;"></div>
<div style="left:1924.9px;top:1274.5px;width:1.3px;height:17.5px;background:#f4cf4a;"></div>
<div style="left:1928.7px;top:1274.5px;width:1.3px;height:17.5px;background:#f4cf4a;"></div>
<div style="left:1931px;top:1274.5px;width:3px;height:17.5px;background:#f3ecdf;"></div>
<div style="left:1935.5px;top:1274.5px;width:1.5px;height:17.5px;background:#f3ecdf;"></div>
<div style="left:1939.5px;top:1274.5px;width:5px;height:17.5px;background:#f3ecdf;"></div>
<div style="left:1945.3px;top:1274.5px;width:1.5px;height:17.5px;background:#f3ecdf;"></div>
<div style="left:1949.3px;top:1274.5px;width:1.3px;height:17.5px;background:#f4cf4a;"></div>
<div style="left:1951.6px;top:1274.5px;width:1.5px;height:17.5px;background:#f3ecdf;"></div>
<div style="left:1953.9px;top:1274.5px;width:1.5px;height:17.5px;background:#f3ecdf;"></div>
<div style="left:1956.9px;top:1274.5px;width:1.3px;height:17.5px;background:#f4cf4a;"></div>
<div style="left:1960.7px;top:1274.5px;width:1.5px;height:17.5px;background:#f3ecdf;"></div>
<div style="left:1963px;top:1274.5px;width:5px;height:17.5px;background:#ece5d6;"></div>
<div style="left:1968.8px;top:1274.5px;width:1.2px;height:17.5px;background:#ece5d6;"></div>
<div style="left:1972.5px;top:1274.5px;width:5px;height:17.5px;background:#f3ecdf;"></div>
<div style="left:1979px;top:1274.5px;width:1.2px;height:17.5px;background:#ece5d6;"></div>
<div style="left:1981.7px;top:1274.5px;width:2px;height:17.5px;background:#f3ecdf;"></div>
<div style="left:1984.5px;top:1274.5px;width:1.5px;height:17.5px;background:#f3ecdf;"></div>
<div style="left:1987px;top:1274.5px;width:5px;height:17.5px;background:#f3ecdf;"></div>
<div style="left:1993px;top:1274.5px;width:1.2px;height:17.5px;background:#f3ecdf;"></div>
<div style="left:1996.7px;top:1274.5px;width:1.5px;height:17.5px;background:#f3ecdf;"></div>
<div style="left:2000.7px;top:1274.5px;width:1.2px;height:17.5px;background:#f3ecdf;"></div>
<div style="left:2003.4px;top:1274.5px;width:2px;height:17.5px;background:#f3ecdf;"></div>
<div style="left:2006.9px;top:1274.5px;width:1.3px;height:17.5px;background:#f4cf4a;"></div>
<div style="left:2010.7px;top:1274.5px;width:3px;height:17.5px;background:#f3ecdf;"></div>
<div style="left:2014.5px;top:1274.5px;width:2px;height:17.5px;background:#f3ecdf;"></div>
<div style="left:2017.5px;top:1274.5px;width:3px;height:17.5px;background:#f3ecdf;"></div>
<div style="left:2023px;top:1274.5px;width:2px;height:17.5px;background:#ece5d6;"></div>
<div style="left:2026.5px;top:1274.5px;width:1.2px;height:17.5px;background:#f3ecdf;"></div>
<div style="left:2030.2px;top:1274.5px;width:8px;height:17.5px;background:#f3ecdf;"></div>
<div style="left:2039.7px;top:1274.5px;width:2px;height:17.5px;background:#f3ecdf;"></div>
<div style="left:2042.5px;top:1274.5px;width:1.5px;height:17.5px;background:#f3ecdf;"></div>
<div style="left:2046.5px;top:1274.5px;width:1.2px;height:17.5px;background:#f3ecdf;"></div>
<div style="left:2050.2px;top:1274.5px;width:1.5px;height:17.5px;background:#ece5d6;"></div>
<div style="left:2054.2px;top:1274.5px;width:1.2px;height:17.5px;background:#ece5d6;"></div>
<div style="left:2056.2px;top:1274.5px;width:3px;height:17.5px;background:#ece5d6;"></div>
<div style="left:2060.2px;top:1274.5px;width:1.3px;height:17.5px;background:#f4cf4a;"></div>
<div style="left:2062.3px;top:1274.5px;width:1.5px;height:17.5px;background:#f3ecdf;"></div>
<div style="left:2064.8px;top:1274.5px;width:1.3px;height:17.5px;background:#f4cf4a;"></div>
<div style="left:2066.9px;top:1274.5px;width:1.5px;height:17.5px;background:#ece5d6;"></div>
<div style="left:2070.9px;top:1274.5px;width:2px;height:17.5px;background:#ece5d6;"></div>
<div style="left:2074.4px;top:1274.5px;width:8px;height:17.5px;background:#ece5d6;"></div>
<div style="left:2083.2px;top:1274.5px;width:1.5px;height:17.5px;background:#ece5d6;"></div>
<div style="left:2087.2px;top:1274.5px;width:1.5px;height:17.5px;background:#ece5d6;"></div>
<div style="left:2104.5px;top:552px;width:18.5px;height:40px;background:#f4cf4a;"></div>
<div style="left:1820px;top:551px;width:284.5px;height:44px;background:#f4cf4a;border:5px solid #202022;box-sizing:border-box;"></div>
<div class="t" style="left:1831.90px;top:554.43px;font-size:28.1875px;line-height:36px;color:#2a2a2a;letter-spacing:0.378px;">Event: load</div>
<div class="t" style="left:1834.40px;top:596.93px;font-size:28.1875px;line-height:36px;color:#2a2a2a;letter-spacing:0.462px;">Run microtasks</div>
<div class="t" style="left:1834.90px;top:639.43px;font-size:28.1875px;line-height:36px;color:#2a2a2a;">b</div>
<div class="t" style="left:1834.90px;top:681.93px;font-size:28.1875px;line-height:36px;color:#2a2a2a;letter-spacing:0.472px;">(anonymous)</div>
<div class="t" style="left:1834.90px;top:724.43px;font-size:28.1875px;line-height:36px;color:#2a2a2a;letter-spacing:-0.640px;">Aa</div>
<div class="t" style="left:1834.90px;top:766.93px;font-size:28.1875px;line-height:36px;color:#2a2a2a;letter-spacing:0.472px;">(anonymous)</div>
<div class="t" style="left:1834.90px;top:809.43px;font-size:28.1875px;line-height:36px;color:#2a2a2a;letter-spacing:-0.103px;">Qm</div>
<div class="t" style="left:1836.90px;top:851.93px;font-size:28.1875px;line-height:36px;color:#2a2a2a;letter-spacing:-0.763px;">GB</div>
<div class="t" style="left:1836.90px;top:894.43px;font-size:28.1875px;line-height:36px;color:#2a2a2a;">X</div>
<div class="t" style="left:1836.90px;top:936.93px;font-size:28.1875px;line-height:36px;color:#2a2a2a;letter-spacing:0.426px;">cGX_</div>
<div class="t" style="left:1836.90px;top:979.43px;font-size:28.1875px;line-height:36px;color:#2a2a2a;">k</div>
<div class="t" style="left:1836.90px;top:1021.93px;font-size:28.1875px;line-height:36px;color:#2a2a2a;letter-spacing:1.006px;">Jv</div>
<div class="t" style="left:1844.90px;top:1064.43px;font-size:28.1875px;line-height:36px;color:#2a2a2a;">E</div>
<div class="t" style="left:1844.90px;top:1106.93px;font-size:28.1875px;line-height:36px;color:#2a2a2a;letter-spacing:0.775px;">ri</div>
<div class="t" style="left:1844.90px;top:1149.43px;font-size:28.1875px;line-height:36px;color:#2a2a2a;letter-spacing:1.215px;">pc</div>
<div class="t" style="left:1845.90px;top:1191.93px;font-size:28.1875px;line-height:36px;color:#2a2a2a;letter-spacing:0.381px;">(anonymous)</div>
<div class="t" style="left:1874.40px;top:1234.43px;font-size:28.1875px;line-height:36px;color:#2a2a2a;letter-spacing:-0.667px;">qR</div>
<div style="left:2127px;top:582px;width:19.7px;height:56.5px;background:#bdbdbd;border-radius:10px;"></div>
<div style="left:792.5px;top:551.5px;width:2px;height:740.5px;background:rgba(120,150,220,.22);"></div>
<div style="left:1047.5px;top:551.5px;width:2px;height:740.5px;background:rgba(120,150,220,.22);"></div>
<div style="left:1304.5px;top:551.5px;width:2px;height:740.5px;background:rgba(120,150,220,.22);"></div>
<div style="left:1559.7px;top:551.5px;width:2px;height:740.5px;background:rgba(120,150,220,.22);"></div>
<div style="left:1814.8px;top:551.5px;width:2px;height:740.5px;background:rgba(120,150,220,.22);"></div>
<div style="left:2069.7px;top:551.5px;width:2px;height:740.5px;background:rgba(120,150,220,.22);"></div>
<div style="left:960px;top:391.5px;width:581.5px;height:900.5px;background:linear-gradient(180deg,rgba(255,125,210,0) 0%,rgba(250,122,210,.135) 85%);"></div>
<div style="left:959.7px;top:391.5px;width:2px;height:900.5px;background:#e9508f;"></div>
<div style="left:1539.8px;top:391.5px;width:2px;height:900.5px;background:#e9508f;"></div>
<div style="left:960px;top:1281px;width:582px;height:11px;background:#ea5493;"></div>
<div style="left:707px;top:552px;width:838.5px;height:43px;background:transparent;border:5px solid #2653ce;box-sizing:border-box;"></div>
<div style="left:775px;top:1017.5px;width:667px;height:45.5px;background:transparent;border:5.5px solid #202022;box-sizing:border-box;"></div>
<div class="t" style="left:1134.30px;top:1189.85px;font-size:30.75px;line-height:39px;color:#ad1a5c;letter-spacing:0.319px;">Beyond deadline</div>
<div class="t" style="left:1180.80px;top:1231.85px;font-size:30.75px;line-height:39px;color:#ad1a5c;letter-spacing:-0.045px;">113.80 ms</div>
<svg style="left:0px;top:0px;pointer-events:none;" width="2264" height="1642" viewBox="0 0 2264 1642"><path d="M1442.5 1040 L1812 580" stroke="#222224" stroke-width="5.2" fill="none"/><path d="M1818.5 572 L1799 580.5 L1813.5 593 Z" fill="#222224"/><circle cx="1442.5" cy="1040" r="5.5" fill="none" stroke="#222224" stroke-width="2.6"/><circle cx="1817" cy="573" r="5" fill="none" stroke="#222224" stroke-width="2.6"/><path d="M1086 998 L1108 1018" stroke="#1c1c1e" stroke-width="5" fill="none"/><circle cx="1108" cy="1018" r="7" fill="#1c1c1e"/><path d="M1941 531 L1961 549.5" stroke="#1c1c1e" stroke-width="5" fill="none"/><circle cx="1961" cy="549.5" r="7" fill="#1c1c1e"/><path d="M1621 832.5 L1670 807.5 L1670 827.7 L1784 827.7 L1784 837.3 L1670 837.3 L1670 857.5 Z" fill="#152cf5"/><path d="M1202.5 970.8 L1252 945.8 L1252 966.0 L1370.8 966.0 L1370.8 975.5999999999999 L1252 975.5999999999999 L1252 995.8 Z" fill="#152cf5"/><path d="M1391 1210.7 L1441 1186.2 L1441 1205.9 L1566 1204.2 L1566 1213.8 L1441 1215.5 L1441 1235.2 Z" fill="#152cf5"/></svg>
<div style="left:988px;top:940px;width:201.5px;height:61px;background:#000;border-radius:13px;"></div>
<div class="t" style="left:1002.60px;top:948.59px;font-size:36.4px;line-height:46px;color:#fff;letter-spacing:-0.418px;font-weight:700;">Data fetch</div>
<div style="left:1887px;top:472px;width:110px;height:61px;background:#000;border-radius:13px;"></div>
<div class="t" style="left:1901.10px;top:479.49px;font-size:36.4px;line-height:46px;color:#fff;letter-spacing:-1.663px;font-weight:700;">Load</div>
<div style="left:592px;top:1292px;width:1560px;height:1.5px;background:#d3e3fd;"></div>
<div style="left:592px;top:1293.5px;width:1560px;height:67px;background:#eef2fb;"></div>
<div style="left:592px;top:1360.5px;width:1560px;height:1.5px;background:#d3e3fd;"></div>
<div style="left:592px;top:1362px;width:1560px;height:132px;background:#fff;"></div>
<div class="t" style="left:615.30px;top:1307.95px;font-size:30.75px;line-height:39px;color:#0b57d0;letter-spacing:0.405px;">Summary</div>
<div style="left:592px;top:1358px;width:183px;height:4px;background:#1a5ad7;"></div>
<div class="t" style="left:798.80px;top:1307.95px;font-size:30.75px;line-height:39px;color:#474747;letter-spacing:1.226px;">Bottom-up</div>
<div class="t" style="left:1001.30px;top:1307.95px;font-size:30.75px;line-height:39px;color:#474747;letter-spacing:0.377px;">Call tree</div>
<div class="t" style="left:1168.30px;top:1307.95px;font-size:30.75px;line-height:39px;color:#474747;letter-spacing:0.354px;">Event log</div>
<div style="left:612.5px;top:1386.5px;width:29.5px;height:29.5px;background:#f4cf4a;border:1.5px solid #d3e3fd;box-sizing:border-box;"></div>
<div class="t" style="left:652.20px;top:1379.96px;font-size:33.3125px;line-height:42px;color:#1f1f1f;letter-spacing:0.278px;">Fire idle callback</div>
<div style="left:592px;top:1441px;width:1530px;height:48.5px;background:#faeaea;"></div>
<div class="t" style="left:617.30px;top:1438.85px;font-size:30.75px;line-height:39px;color:#a9281f;letter-spacing:0.434px;">Warning</div>
<div class="t" style="left:765.80px;top:1438.85px;font-size:30.75px;line-height:39px;color:#1f1f1f;letter-spacing:0.382px;">Idle callback execution extended beyond deadline by 113.74 ms</div>
<div style="left:2122px;top:1362px;width:30px;height:132px;background:#fafafa;"></div>
<div style="left:2122px;top:1362px;width:1.5px;height:132px;background:#e6e6e6;"></div>
<div style="left:2130px;top:1362.5px;width:16px;height:19.5px;background:#c1c1c1;border-radius:8px;"></div>
<div style="left:115.5px;top:196px;width:74px;height:71.5px;background:transparent;border:9px solid #1428f3;border-radius:21px;box-sizing:border-box;"></div>
<div style="left:260.8px;top:257.7px;width:284.1px;height:85px;background:transparent;border:10.4px solid #1428f3;border-radius:25px;box-sizing:border-box;"></div>
</div></div><div id="ring"></div></div></body></html>
